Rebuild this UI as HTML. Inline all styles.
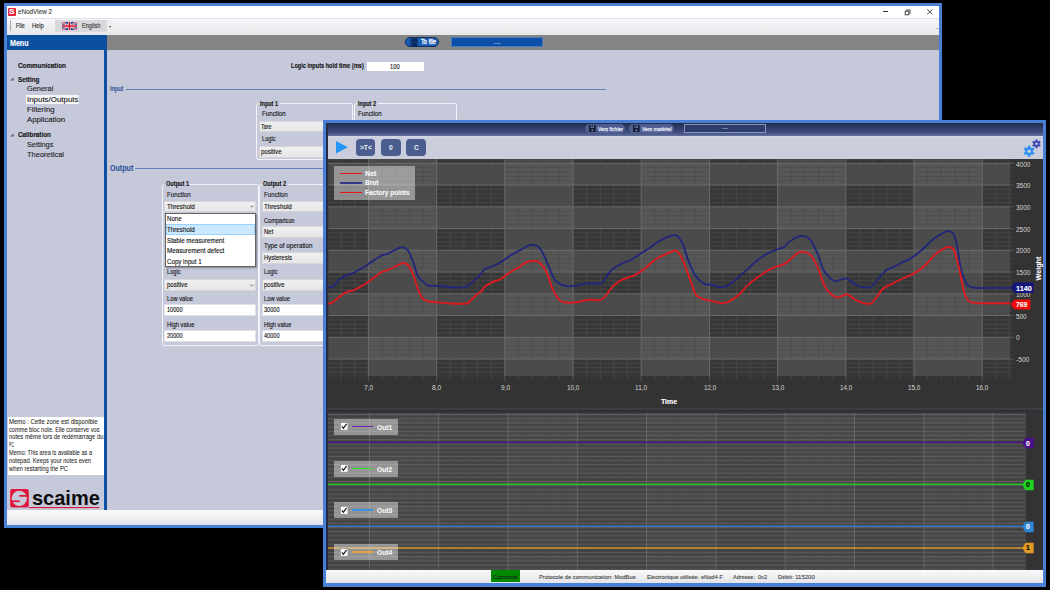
<!DOCTYPE html>
<html><head><meta charset="utf-8"><style>
html,body{margin:0;padding:0;}
body{width:1050px;height:590px;background:#000;position:relative;overflow:hidden;font-family:"Liberation Sans", sans-serif;}
.r{position:absolute;}
.t{position:absolute;white-space:pre;line-height:1;transform-origin:0 0;-webkit-text-stroke:0.12px currentColor;}
</style></head><body>
<div class="r" style="left:4px;top:3px;width:937.8px;height:524.8px;background:#4a7fd6;"></div>
<div class="r" style="left:7px;top:6px;width:931.5px;height:518.8px;background:#c5c9da;"></div>
<div class="r" style="left:7px;top:6px;width:931.5px;height:12px;background:#fff;"></div>
<div class="r" style="left:8px;top:8px;width:8px;height:8px;background:#e2233a;border-radius:1px;"></div>
<div class="t" style="left:9.20px;top:8.04px;font-size:8px;font-weight:bold;color:#fff;transform:scaleX(1.0480);">S</div>
<div class="t" style="left:18.00px;top:9.37px;font-size:6.6px;font-weight:normal;color:#444;transform:scaleX(0.9594);">eNodView 2</div>
<div class="r" style="left:883px;top:11px;width:5px;height:1px;background:#333;"></div>
<svg class="r" style="left:904px;top:8.5px" width="7" height="7" viewBox="0 0 7 7"><path d="M2.4 1.5 V0.9 H6.1 V4.6 H5.4" stroke="#333" stroke-width="0.8" fill="none"/><rect x="1.2" y="2.2" width="3.6" height="3.6" stroke="#333" stroke-width="0.9" fill="none"/></svg>
<svg class="r" style="left:926px;top:9px" width="8" height="6" viewBox="0 0 8 6"><path d="M1.2 0.2 L6.5 5.3 M6.5 0.2 L1.2 5.3" stroke="#333" stroke-width="0.9"/></svg>
<div class="r" style="left:7px;top:18px;width:931.5px;height:1px;background:#dde3ee;"></div>
<div class="r" style="left:7px;top:19px;width:931.5px;height:15.5px;background:linear-gradient(#f7f7f9,#e6e7ea);"></div>
<div class="r" style="left:10px;top:20px;width:1px;height:11px;background:#a8a8a8;"></div>
<div class="t" style="left:15.50px;top:23.07px;font-size:6.6px;font-weight:normal;color:#222;transform:scaleX(0.8094);">File</div>
<div class="t" style="left:31.60px;top:23.07px;font-size:6.6px;font-weight:normal;color:#222;transform:scaleX(0.8627);">Help</div>
<div class="r" style="left:55px;top:19.5px;width:52px;height:12.5px;background:#d9d9dc;"></div>
<svg class="r" style="left:62px;top:22px" width="15" height="8" viewBox="0 0 60 30" preserveAspectRatio="none">
<rect width="60" height="30" fill="#1f3c8f"/>
<path d="M0,0 L60,30 M60,0 L0,30" stroke="#fff" stroke-width="6"/>
<path d="M0,0 L60,30 M60,0 L0,30" stroke="#cf142b" stroke-width="3"/>
<path d="M30,0 V30 M0,15 H60" stroke="#fff" stroke-width="10"/>
<path d="M30,0 V30 M0,15 H60" stroke="#cf142b" stroke-width="6"/></svg>
<div class="t" style="left:81.70px;top:23.17px;font-size:6.6px;font-weight:normal;color:#333;transform:scaleX(0.8456);">English</div>
<div class="r" style="left:107px;top:19.5px;width:6px;height:12.5px;background:#ededf0;"></div>
<svg class="r" style="left:108.9px;top:25.6px" width="3" height="2"><path d="M0 0 H2.4 L1.2 1.6 Z" fill="#333"/></svg>
<div class="r" style="left:936.5px;top:28.3px;width:1.5px;height:3.2px;background:repeating-linear-gradient(#777 0 0.8px,transparent 0.8px 1.6px);"></div>
<div class="r" style="left:7px;top:34.5px;width:100px;height:15.5px;background:#0b4f9e;"></div>
<div class="t" style="left:9.50px;top:38.68px;font-size:8.5px;font-weight:bold;color:#fff;transform:scaleX(0.8332);">Menu</div>
<div class="r" style="left:107px;top:34.5px;width:831.5px;height:15.5px;background:#858585;"></div>
<div class="r" style="left:405px;top:37px;width:33.5px;height:9.7px;background:#1a5cb4;border:0.8px solid #0c2e66;border-radius:5px;box-sizing:border-box;"></div>
<div class="r" style="left:410px;top:38px;width:8px;height:8px;background:#123f86;"></div>
<div class="r" style="left:411.5px;top:39px;width:5px;height:2.5px;background:#0a2a5c;"></div>
<div class="r" style="left:411.5px;top:43px;width:5px;height:3px;background:#0a2a5c;"></div>
<div class="t" style="left:421.00px;top:38.97px;font-size:6.6px;font-weight:normal;color:#f4f6fb;transform:scaleX(0.8704);-webkit-text-stroke:0.3px #f4f6fb;">To file</div>
<div class="r" style="left:451.3px;top:37.3px;width:92px;height:9.4px;background:#0b4fa6;border:0.6px solid #4c7bc6;box-sizing:border-box;"></div>
<div class="t" style="left:494.05px;top:40.28px;font-size:6px;font-weight:normal;color:#dfe8f8;transform:scaleX(1.0833);">---</div>
<div class="r" style="left:7px;top:50px;width:97px;height:460px;background:#c5c9da;"></div>
<div class="r" style="left:104.2px;top:50px;width:2.8px;height:460px;background:#0d4fa3;"></div>
<div class="r" style="left:107px;top:50px;width:831.5px;height:460px;background:#c5c9da;"></div>
<div class="t" style="left:17.90px;top:61.56px;font-size:7.2px;font-weight:bold;color:#111;transform:scaleX(0.8838);">Communication</div>
<svg class="r" style="left:10.4px;top:77px" width="4" height="4"><path d="M3.5 0.5 V3.5 H0.5 Z" fill="#555"/></svg>
<div class="t" style="left:17.90px;top:75.76px;font-size:7.2px;font-weight:bold;color:#111;transform:scaleX(0.8785);">Setting</div>
<div class="t" style="left:27.00px;top:85.14px;font-size:7.8px;font-weight:normal;color:#222;transform:scaleX(0.9477);">General</div>
<div class="r" style="left:26px;top:95px;width:53px;height:9px;background:#f6f6f8;"></div>
<div class="t" style="left:27.00px;top:95.54px;font-size:7.8px;font-weight:normal;color:#222;transform:scaleX(1.0154);">Inputs/Outputs</div>
<div class="t" style="left:27.00px;top:105.54px;font-size:7.8px;font-weight:normal;color:#222;transform:scaleX(0.9915);">Filtering</div>
<div class="t" style="left:27.00px;top:116.14px;font-size:7.8px;font-weight:normal;color:#222;">Application</div>
<svg class="r" style="left:10.4px;top:133px" width="4" height="4"><path d="M3.5 0.5 V3.5 H0.5 Z" fill="#555"/></svg>
<div class="t" style="left:17.90px;top:131.26px;font-size:7.2px;font-weight:bold;color:#111;transform:scaleX(0.8762);">Calibration</div>
<div class="t" style="left:27.00px;top:140.54px;font-size:7.8px;font-weight:normal;color:#222;transform:scaleX(0.9330);">Settings</div>
<div class="t" style="left:27.00px;top:150.64px;font-size:7.8px;font-weight:normal;color:#222;transform:scaleX(0.9591);">Theoretical</div>
<div class="r" style="left:7.7px;top:417px;width:96.3px;height:58px;background:#fff;"></div>
<div class="t" style="left:9.00px;top:418.67px;font-size:6.6px;font-weight:normal;color:#1a1a1a;transform:scaleX(0.9042);-webkit-text-stroke:0.05px #1a1a1a;">Memo : Cette zone est disponible</div>
<div class="t" style="left:9.00px;top:426.57px;font-size:6.6px;font-weight:normal;color:#1a1a1a;transform:scaleX(0.8573);-webkit-text-stroke:0.05px #1a1a1a;">comme bloc note. Elle conserve vos</div>
<div class="t" style="left:9.00px;top:434.47px;font-size:6.6px;font-weight:normal;color:#1a1a1a;transform:scaleX(0.8860);-webkit-text-stroke:0.05px #1a1a1a;">notes même lors de redémarrage du</div>
<div class="t" style="left:9.00px;top:442.37px;font-size:6.6px;font-weight:normal;color:#1a1a1a;transform:scaleX(0.5451);-webkit-text-stroke:0.05px #1a1a1a;">PC</div>
<div class="t" style="left:9.00px;top:450.27px;font-size:6.6px;font-weight:normal;color:#1a1a1a;transform:scaleX(0.8460);-webkit-text-stroke:0.05px #1a1a1a;">Memo: This area is available as a</div>
<div class="t" style="left:9.00px;top:458.17px;font-size:6.6px;font-weight:normal;color:#1a1a1a;transform:scaleX(0.8636);-webkit-text-stroke:0.05px #1a1a1a;">notepad. Keeps your notes even</div>
<div class="t" style="left:9.00px;top:466.07px;font-size:6.6px;font-weight:normal;color:#1a1a1a;transform:scaleX(0.8796);-webkit-text-stroke:0.05px #1a1a1a;">when restarting the PC</div>
<svg class="r" style="left:10px;top:488px" width="91" height="22" viewBox="0 0 91 22">
<rect x="0.2" y="1" width="18.6" height="18.6" rx="2" fill="#e0173d"/>
<circle cx="9.3" cy="10.3" r="7.6" fill="#c7c9d6"/>
<rect x="9.3" y="7.0" width="9.6" height="1.7" fill="#e0173d"/>
<rect x="0.5" y="12.4" width="9.3" height="1.7" fill="#e0173d"/>
<rect x="18.8" y="19" width="70.5" height="1.1" fill="#e0173d"/>
</svg>
<div class="t" style="left:31.50px;top:488.14px;font-size:20.5px;font-weight:bold;color:#0d0d0d;transform:scaleX(0.9751);-webkit-text-stroke:0;">scaime</div>
<div class="r" style="left:7px;top:510px;width:931.5px;height:15px;background:linear-gradient(#fafafb,#e4e5e8);"></div>
<div class="t" style="left:290.70px;top:62.67px;font-size:6.6px;font-weight:bold;color:#111;transform:scaleX(0.8456);">Logic inputs hold time (ms)</div>
<div class="r" style="left:366.6px;top:61.9px;width:57.4px;height:9.1px;background:#fff;"></div>
<div class="t" style="left:390.20px;top:63.56px;font-size:6.8px;font-weight:normal;color:#111;transform:scaleX(0.8463);">100</div>
<div class="t" style="left:109.70px;top:86.27px;font-size:6.6px;font-weight:bold;color:#3a5b9e;transform:scaleX(0.8310);">Input</div>
<div class="r" style="left:125.8px;top:89px;width:480px;height:1px;background:#5f80b8;"></div>
<div class="t" style="left:109.70px;top:163.72px;font-size:9.2px;font-weight:bold;color:#2f5597;transform:scaleX(0.7738);">Output</div>
<div class="r" style="left:135.2px;top:168px;width:470px;height:1px;background:#5f80b8;"></div>
<div class="r" style="left:256.3px;top:103.2px;width:96.5px;height:57px;border:1.8px solid #f3f4f9;border-radius:2.5px;box-sizing:border-box;"></div>
<div class="r" style="left:258.8px;top:101.2px;width:21px;height:4px;background:#c5c9da;"></div>
<div class="t" style="left:260.30px;top:99.96px;font-size:7px;font-weight:bold;color:#111;transform:scaleX(0.7842);">Input 1</div>
<div class="t" style="left:261.50px;top:110.86px;font-size:6.8px;font-weight:normal;color:#111;transform:scaleX(0.9088);">Function</div>
<div class="r" style="left:258.5px;top:120.6px;width:92px;height:11.8px;background:linear-gradient(#f0f0f0,#e6e6e6);border:0.6px solid #d6d6d8;box-sizing:border-box;"></div>
<div class="t" style="left:261.30px;top:123.66px;font-size:6.8px;font-weight:normal;color:#111;transform:scaleX(0.7934);">Tare</div>
<svg class="r" style="left:344px;top:125.19999999999999px" width="4" height="3"><path d="M0.3 0.5 L2 2.2 L3.7 0.5" stroke="#555" stroke-width="0.7" fill="none"/></svg>
<div class="t" style="left:261.50px;top:136.06px;font-size:6.8px;font-weight:normal;color:#111;transform:scaleX(0.8308);">Logic</div>
<div class="r" style="left:258.5px;top:145.8px;width:92px;height:11.8px;background:linear-gradient(#f0f0f0,#e6e6e6);border:0.6px solid #d6d6d8;box-sizing:border-box;"></div>
<div class="t" style="left:261.30px;top:148.86px;font-size:6.8px;font-weight:normal;color:#111;transform:scaleX(0.8895);">positive</div>
<svg class="r" style="left:344px;top:150.4px" width="4" height="3"><path d="M0.3 0.5 L2 2.2 L3.7 0.5" stroke="#555" stroke-width="0.7" fill="none"/></svg>
<div class="r" style="left:354.1px;top:103.2px;width:102.8px;height:57px;border:1.8px solid #f3f4f9;border-radius:2.5px;box-sizing:border-box;"></div>
<div class="r" style="left:356.6px;top:101.2px;width:21px;height:4px;background:#c5c9da;"></div>
<div class="t" style="left:358.10px;top:99.96px;font-size:7px;font-weight:bold;color:#111;transform:scaleX(0.7842);">Input 2</div>
<div class="t" style="left:357.90px;top:110.86px;font-size:6.8px;font-weight:normal;color:#111;transform:scaleX(0.9088);">Function</div>
<div class="r" style="left:161.7px;top:183.6px;width:97.5px;height:162.4px;border:1.8px solid #f3f4f9;border-radius:2.5px;box-sizing:border-box;"></div>
<div class="r" style="left:164.2px;top:181.6px;width:26px;height:4px;background:#c5c9da;"></div>
<div class="t" style="left:165.70px;top:180.36px;font-size:7px;font-weight:bold;color:#111;transform:scaleX(0.7991);">Output 1</div>
<div class="t" style="left:166.60px;top:191.66px;font-size:6.8px;font-weight:normal;color:#111;transform:scaleX(0.9088);">Function</div>
<div class="r" style="left:164.3px;top:200.5px;width:91.8px;height:11.8px;background:linear-gradient(#f0f0f0,#e6e6e6);border:0.6px solid #d6d6d8;box-sizing:border-box;"></div>
<div class="t" style="left:167.10px;top:203.56px;font-size:6.8px;font-weight:normal;color:#111;transform:scaleX(0.9195);">Threshold</div>
<svg class="r" style="left:249.60000000000002px;top:205.1px" width="4" height="3"><path d="M0.3 0.5 L2 2.2 L3.7 0.5" stroke="#555" stroke-width="0.7" fill="none"/></svg>
<div class="t" style="left:166.60px;top:269.36px;font-size:6.8px;font-weight:normal;color:#111;transform:scaleX(0.8308);">Logic</div>
<div class="r" style="left:164.3px;top:279.1px;width:91.8px;height:11.8px;background:linear-gradient(#f0f0f0,#e6e6e6);border:0.6px solid #d6d6d8;box-sizing:border-box;"></div>
<div class="t" style="left:167.10px;top:282.16px;font-size:6.8px;font-weight:normal;color:#111;transform:scaleX(0.8895);">positive</div>
<svg class="r" style="left:249.60000000000002px;top:283.70000000000005px" width="4" height="3"><path d="M0.3 0.5 L2 2.2 L3.7 0.5" stroke="#555" stroke-width="0.7" fill="none"/></svg>
<div class="t" style="left:166.60px;top:295.86px;font-size:6.8px;font-weight:normal;color:#111;transform:scaleX(0.8494);">Low value</div>
<div class="r" style="left:164.3px;top:304.1px;width:91.8px;height:11.8px;background:#fff;border:0.6px solid #dfe1e8;box-sizing:border-box;"></div>
<div class="t" style="left:167.10px;top:307.16px;font-size:6.8px;font-weight:normal;color:#111;transform:scaleX(0.8198);">10000</div>
<div class="t" style="left:166.60px;top:321.86px;font-size:6.8px;font-weight:normal;color:#111;transform:scaleX(0.8560);">High value</div>
<div class="r" style="left:164.3px;top:330px;width:91.8px;height:11.8px;background:#fff;border:0.6px solid #dfe1e8;box-sizing:border-box;"></div>
<div class="t" style="left:167.10px;top:333.06px;font-size:6.8px;font-weight:normal;color:#111;transform:scaleX(0.8198);">20000</div>
<div class="r" style="left:259.2px;top:183.6px;width:97.5px;height:162.4px;border:1.8px solid #f3f4f9;border-radius:2.5px;box-sizing:border-box;"></div>
<div class="r" style="left:261.7px;top:181.6px;width:26px;height:4px;background:#c5c9da;"></div>
<div class="t" style="left:263.20px;top:180.36px;font-size:7px;font-weight:bold;color:#111;transform:scaleX(0.7991);">Output 2</div>
<div class="t" style="left:263.50px;top:191.66px;font-size:6.8px;font-weight:normal;color:#111;transform:scaleX(0.9088);">Function</div>
<div class="r" style="left:261.5px;top:200.5px;width:93px;height:11.8px;background:linear-gradient(#f0f0f0,#e6e6e6);border:0.6px solid #d6d6d8;box-sizing:border-box;"></div>
<div class="t" style="left:264.30px;top:203.56px;font-size:6.8px;font-weight:normal;color:#111;transform:scaleX(0.9195);">Threshold</div>
<svg class="r" style="left:348px;top:205.1px" width="4" height="3"><path d="M0.3 0.5 L2 2.2 L3.7 0.5" stroke="#555" stroke-width="0.7" fill="none"/></svg>
<div class="t" style="left:263.50px;top:217.56px;font-size:6.8px;font-weight:normal;color:#111;transform:scaleX(0.8321);">Comparison</div>
<div class="r" style="left:261.5px;top:226.4px;width:93px;height:11.8px;background:linear-gradient(#f0f0f0,#e6e6e6);border:0.6px solid #d6d6d8;box-sizing:border-box;"></div>
<div class="t" style="left:264.30px;top:229.46px;font-size:6.8px;font-weight:normal;color:#111;transform:scaleX(0.8792);">Net</div>
<svg class="r" style="left:348px;top:231.0px" width="4" height="3"><path d="M0.3 0.5 L2 2.2 L3.7 0.5" stroke="#555" stroke-width="0.7" fill="none"/></svg>
<div class="t" style="left:263.50px;top:243.46px;font-size:6.8px;font-weight:normal;color:#111;transform:scaleX(0.9233);">Type of operation</div>
<div class="r" style="left:261.5px;top:252.3px;width:93px;height:11.8px;background:linear-gradient(#f0f0f0,#e6e6e6);border:0.6px solid #d6d6d8;box-sizing:border-box;"></div>
<div class="t" style="left:264.30px;top:255.36px;font-size:6.8px;font-weight:normal;color:#111;transform:scaleX(0.8823);">Hysteresis</div>
<svg class="r" style="left:348px;top:256.90000000000003px" width="4" height="3"><path d="M0.3 0.5 L2 2.2 L3.7 0.5" stroke="#555" stroke-width="0.7" fill="none"/></svg>
<div class="t" style="left:263.50px;top:269.36px;font-size:6.8px;font-weight:normal;color:#111;transform:scaleX(0.8308);">Logic</div>
<div class="r" style="left:261.5px;top:279.1px;width:93px;height:11.8px;background:linear-gradient(#f0f0f0,#e6e6e6);border:0.6px solid #d6d6d8;box-sizing:border-box;"></div>
<div class="t" style="left:264.30px;top:282.16px;font-size:6.8px;font-weight:normal;color:#111;transform:scaleX(0.8895);">positive</div>
<svg class="r" style="left:348px;top:283.70000000000005px" width="4" height="3"><path d="M0.3 0.5 L2 2.2 L3.7 0.5" stroke="#555" stroke-width="0.7" fill="none"/></svg>
<div class="t" style="left:263.50px;top:295.86px;font-size:6.8px;font-weight:normal;color:#111;transform:scaleX(0.8494);">Low value</div>
<div class="r" style="left:261.5px;top:304.1px;width:93px;height:11.8px;background:#fff;border:0.6px solid #dfe1e8;box-sizing:border-box;"></div>
<div class="t" style="left:264.30px;top:307.16px;font-size:6.8px;font-weight:normal;color:#111;transform:scaleX(0.8198);">30000</div>
<div class="t" style="left:263.50px;top:321.86px;font-size:6.8px;font-weight:normal;color:#111;transform:scaleX(0.8560);">High value</div>
<div class="r" style="left:261.5px;top:330px;width:93px;height:11.8px;background:#fff;border:0.6px solid #dfe1e8;box-sizing:border-box;"></div>
<div class="t" style="left:264.30px;top:333.06px;font-size:6.8px;font-weight:normal;color:#111;transform:scaleX(0.8198);">40000</div>
<div class="r" style="left:164.8px;top:213.4px;width:91px;height:53.8px;background:#fff;border:0.7px solid #646464;box-sizing:border-box;box-shadow:1px 1px 1.5px rgba(0,0,0,0.35);"></div>
<div class="r" style="left:165.6px;top:224.4px;width:89.4px;height:10.4px;background:#cce8ff;border:0.6px solid #99d1ff;box-sizing:border-box;"></div>
<div class="t" style="left:167.20px;top:216.36px;font-size:6.8px;font-weight:normal;color:#111;transform:scaleX(0.8985);">None</div>
<div class="t" style="left:167.20px;top:226.96px;font-size:6.8px;font-weight:normal;color:#111;transform:scaleX(0.9195);">Threshold</div>
<div class="t" style="left:167.20px;top:237.86px;font-size:6.8px;font-weight:normal;color:#111;transform:scaleX(0.9136);">Stable measurement</div>
<div class="t" style="left:167.20px;top:248.36px;font-size:6.8px;font-weight:normal;color:#111;transform:scaleX(0.9247);">Measurement defect</div>
<div class="t" style="left:167.20px;top:258.66px;font-size:6.8px;font-weight:normal;color:#111;transform:scaleX(0.9064);">Copy input 1</div>
<div id="w2">
<div class="r" style="left:323px;top:120px;width:723px;height:466.8px;background:#4a7fd6;"></div>
<div class="r" style="left:326px;top:123.3px;width:717px;height:446.4px;background:#3a4260;"></div>
<div class="r" style="left:326px;top:123.3px;width:2px;height:446.4px;background:#232b45;"></div>
<div class="r" style="left:328px;top:123.3px;width:715px;height:12.7px;background:linear-gradient(#232c4e,#3e4c7c 70%,#62719f);"></div>
<div class="r" style="left:585.2px;top:124.3px;width:39.6px;height:8.6px;background:#56659a;border-radius:4.3px;opacity:0.85;"></div>
<svg class="r" style="left:589.0px;top:124.8px" width="6.7" height="7.6" viewBox="0 0 6.7 7.6"><rect width="6.7" height="7.6" fill="#161c38"/><rect x="1.6" y="0.6" width="3.4" height="2.2" fill="#7d89b0"/><rect x="2.6" y="0.9" width="1.2" height="1.4" fill="#161c38"/><circle cx="3.35" cy="5.3" r="1.1" fill="#6e7aa3"/></svg>
<div class="t" style="left:598.20px;top:126.08px;font-size:6px;font-weight:normal;color:#e8ecf6;transform:scaleX(0.8421);-webkit-text-stroke:0.25px #e8ecf6;">Vers fichier</div>
<div class="r" style="left:629.3px;top:124.3px;width:44.3px;height:8.6px;background:#56659a;border-radius:4.3px;opacity:0.85;"></div>
<svg class="r" style="left:633.0999999999999px;top:124.8px" width="6.7" height="7.6" viewBox="0 0 6.7 7.6"><rect width="6.7" height="7.6" fill="#161c38"/><rect x="1.6" y="0.6" width="3.4" height="2.2" fill="#7d89b0"/><rect x="2.6" y="0.9" width="1.2" height="1.4" fill="#161c38"/><circle cx="3.35" cy="5.3" r="1.1" fill="#6e7aa3"/></svg>
<div class="t" style="left:642.30px;top:126.08px;font-size:6px;font-weight:normal;color:#e8ecf6;transform:scaleX(0.8425);-webkit-text-stroke:0.25px #e8ecf6;">Vers matériel</div>
<div class="r" style="left:684.1px;top:124.2px;width:81.6px;height:9.2px;background:#2d3c6a;border:0.6px solid #8a96bc;box-sizing:border-box;"></div>
<div class="t" style="left:721.90px;top:126.34px;font-size:5.5px;font-weight:normal;color:#dfe4f0;transform:scaleX(1.0909);">---</div>
<div class="r" style="left:328px;top:135.8px;width:715px;height:23.3px;background:linear-gradient(#d3d6e3,#c9cddc 15%,#c9cddc);"></div>
<svg class="r" style="left:336px;top:141.3px" width="12" height="12.5"><path d="M0 0 L11.8 6.2 L0 12.4 Z" fill="#2196f3"/></svg>
<div class="r" style="left:356.1px;top:138.7px;width:19.4px;height:17.5px;background:#4b5d8f;border-radius:3.8px;"></div>
<div class="t" style="left:359.90px;top:143.75px;font-size:7.4px;font-weight:bold;color:#eef1f8;transform:scaleX(0.8969);-webkit-text-stroke:0;">&gt;T&lt;</div>
<div class="r" style="left:381.2px;top:138.7px;width:19.4px;height:17.5px;background:#4b5d8f;border-radius:3.8px;"></div>
<div class="t" style="left:389.00px;top:143.75px;font-size:7.4px;font-weight:bold;color:#eef1f8;transform:scaleX(0.9212);-webkit-text-stroke:0;">0</div>
<div class="r" style="left:406.4px;top:138.7px;width:19.4px;height:17.5px;background:#4b5d8f;border-radius:3.8px;"></div>
<div class="t" style="left:413.70px;top:143.75px;font-size:7.4px;font-weight:bold;color:#eef1f8;transform:scaleX(0.8982);-webkit-text-stroke:0;">C</div>
<svg class="r" style="left:1023px;top:138.5px" width="19" height="19" viewBox="0 0 19 19">
<g transform="translate(13.5,4.8)" fill="#3b47b3"><circle r="3.1"/><g id="tg"><rect x="-1" y="-4.4" width="2" height="2" transform="rotate(0)"/><rect x="-1" y="-4.4" width="2" height="2" transform="rotate(60)"/><rect x="-1" y="-4.4" width="2" height="2" transform="rotate(120)"/><rect x="-1" y="-4.4" width="2" height="2" transform="rotate(180)"/><rect x="-1" y="-4.4" width="2" height="2" transform="rotate(240)"/><rect x="-1" y="-4.4" width="2" height="2" transform="rotate(300)"/></g><circle r="1.3" fill="#c9cddc"/></g>
<g transform="translate(6.1,12.2)" fill="#2e8ff0"><circle r="3.9"/><rect x="-1.25" y="-5.5" width="2.5" height="2.4" transform="rotate(0)"/><rect x="-1.25" y="-5.5" width="2.5" height="2.4" transform="rotate(60)"/><rect x="-1.25" y="-5.5" width="2.5" height="2.4" transform="rotate(120)"/><rect x="-1.25" y="-5.5" width="2.5" height="2.4" transform="rotate(180)"/><rect x="-1.25" y="-5.5" width="2.5" height="2.4" transform="rotate(240)"/><rect x="-1.25" y="-5.5" width="2.5" height="2.4" transform="rotate(300)"/><circle r="1.7" fill="#c9cddc"/></g>
</svg>
<svg class="r" style="left:0;top:0" width="1050" height="590" viewBox="0 0 1050 590">
<defs><clipPath id="pc"><rect x="328.2" y="159.1" width="682.1" height="217.2"/></clipPath><clipPath id="dc"><rect x="328" y="412.6" width="698.2" height="157.1"/></clipPath></defs>
<rect x="328" y="159.1" width="715" height="410.6" fill="#333"/>
<g clip-path="url(#pc)">
<rect x="328.2" y="159.1" width="682.0999999999999" height="217.20000000000002" fill="#4b4b4b"/>
<rect x="232.00" y="163.30" width="68.20" height="21.75" fill="#575757"/>
<rect x="232.00" y="206.80" width="68.20" height="21.75" fill="#575757"/>
<rect x="232.00" y="250.30" width="68.20" height="21.75" fill="#575757"/>
<rect x="232.00" y="293.80" width="68.20" height="21.75" fill="#575757"/>
<rect x="232.00" y="337.30" width="68.20" height="21.75" fill="#575757"/>
<rect x="232.00" y="380.80" width="68.20" height="21.75" fill="#575757"/>
<rect x="300.20" y="141.55" width="68.20" height="21.75" fill="#373737"/>
<rect x="300.20" y="185.05" width="68.20" height="21.75" fill="#373737"/>
<rect x="300.20" y="228.55" width="68.20" height="21.75" fill="#373737"/>
<rect x="300.20" y="272.05" width="68.20" height="21.75" fill="#373737"/>
<rect x="300.20" y="315.55" width="68.20" height="21.75" fill="#373737"/>
<rect x="300.20" y="359.05" width="68.20" height="21.75" fill="#373737"/>
<rect x="368.40" y="163.30" width="68.20" height="21.75" fill="#575757"/>
<rect x="368.40" y="206.80" width="68.20" height="21.75" fill="#575757"/>
<rect x="368.40" y="250.30" width="68.20" height="21.75" fill="#575757"/>
<rect x="368.40" y="293.80" width="68.20" height="21.75" fill="#575757"/>
<rect x="368.40" y="337.30" width="68.20" height="21.75" fill="#575757"/>
<rect x="368.40" y="380.80" width="68.20" height="21.75" fill="#575757"/>
<rect x="436.60" y="141.55" width="68.20" height="21.75" fill="#373737"/>
<rect x="436.60" y="185.05" width="68.20" height="21.75" fill="#373737"/>
<rect x="436.60" y="228.55" width="68.20" height="21.75" fill="#373737"/>
<rect x="436.60" y="272.05" width="68.20" height="21.75" fill="#373737"/>
<rect x="436.60" y="315.55" width="68.20" height="21.75" fill="#373737"/>
<rect x="436.60" y="359.05" width="68.20" height="21.75" fill="#373737"/>
<rect x="504.80" y="163.30" width="68.20" height="21.75" fill="#575757"/>
<rect x="504.80" y="206.80" width="68.20" height="21.75" fill="#575757"/>
<rect x="504.80" y="250.30" width="68.20" height="21.75" fill="#575757"/>
<rect x="504.80" y="293.80" width="68.20" height="21.75" fill="#575757"/>
<rect x="504.80" y="337.30" width="68.20" height="21.75" fill="#575757"/>
<rect x="504.80" y="380.80" width="68.20" height="21.75" fill="#575757"/>
<rect x="573.00" y="141.55" width="68.20" height="21.75" fill="#373737"/>
<rect x="573.00" y="185.05" width="68.20" height="21.75" fill="#373737"/>
<rect x="573.00" y="228.55" width="68.20" height="21.75" fill="#373737"/>
<rect x="573.00" y="272.05" width="68.20" height="21.75" fill="#373737"/>
<rect x="573.00" y="315.55" width="68.20" height="21.75" fill="#373737"/>
<rect x="573.00" y="359.05" width="68.20" height="21.75" fill="#373737"/>
<rect x="641.20" y="163.30" width="68.20" height="21.75" fill="#575757"/>
<rect x="641.20" y="206.80" width="68.20" height="21.75" fill="#575757"/>
<rect x="641.20" y="250.30" width="68.20" height="21.75" fill="#575757"/>
<rect x="641.20" y="293.80" width="68.20" height="21.75" fill="#575757"/>
<rect x="641.20" y="337.30" width="68.20" height="21.75" fill="#575757"/>
<rect x="641.20" y="380.80" width="68.20" height="21.75" fill="#575757"/>
<rect x="709.40" y="141.55" width="68.20" height="21.75" fill="#373737"/>
<rect x="709.40" y="185.05" width="68.20" height="21.75" fill="#373737"/>
<rect x="709.40" y="228.55" width="68.20" height="21.75" fill="#373737"/>
<rect x="709.40" y="272.05" width="68.20" height="21.75" fill="#373737"/>
<rect x="709.40" y="315.55" width="68.20" height="21.75" fill="#373737"/>
<rect x="709.40" y="359.05" width="68.20" height="21.75" fill="#373737"/>
<rect x="777.60" y="163.30" width="68.20" height="21.75" fill="#575757"/>
<rect x="777.60" y="206.80" width="68.20" height="21.75" fill="#575757"/>
<rect x="777.60" y="250.30" width="68.20" height="21.75" fill="#575757"/>
<rect x="777.60" y="293.80" width="68.20" height="21.75" fill="#575757"/>
<rect x="777.60" y="337.30" width="68.20" height="21.75" fill="#575757"/>
<rect x="777.60" y="380.80" width="68.20" height="21.75" fill="#575757"/>
<rect x="845.80" y="141.55" width="68.20" height="21.75" fill="#373737"/>
<rect x="845.80" y="185.05" width="68.20" height="21.75" fill="#373737"/>
<rect x="845.80" y="228.55" width="68.20" height="21.75" fill="#373737"/>
<rect x="845.80" y="272.05" width="68.20" height="21.75" fill="#373737"/>
<rect x="845.80" y="315.55" width="68.20" height="21.75" fill="#373737"/>
<rect x="845.80" y="359.05" width="68.20" height="21.75" fill="#373737"/>
<rect x="914.00" y="163.30" width="68.20" height="21.75" fill="#575757"/>
<rect x="914.00" y="206.80" width="68.20" height="21.75" fill="#575757"/>
<rect x="914.00" y="250.30" width="68.20" height="21.75" fill="#575757"/>
<rect x="914.00" y="293.80" width="68.20" height="21.75" fill="#575757"/>
<rect x="914.00" y="337.30" width="68.20" height="21.75" fill="#575757"/>
<rect x="914.00" y="380.80" width="68.20" height="21.75" fill="#575757"/>
<rect x="982.20" y="141.55" width="68.20" height="21.75" fill="#373737"/>
<rect x="982.20" y="185.05" width="68.20" height="21.75" fill="#373737"/>
<rect x="982.20" y="228.55" width="68.20" height="21.75" fill="#373737"/>
<rect x="982.20" y="272.05" width="68.20" height="21.75" fill="#373737"/>
<rect x="982.20" y="315.55" width="68.20" height="21.75" fill="#373737"/>
<rect x="982.20" y="359.05" width="68.20" height="21.75" fill="#373737"/>
<rect x="245.14" y="163.30" width="1" height="21.75" fill="#4f4f4f"/>
<rect x="232.00" y="167.15" width="68.20" height="1" fill="#4f4f4f"/>
<rect x="258.78" y="163.30" width="1" height="21.75" fill="#4f4f4f"/>
<rect x="232.00" y="171.50" width="68.20" height="1" fill="#4f4f4f"/>
<rect x="272.42" y="163.30" width="1" height="21.75" fill="#4f4f4f"/>
<rect x="232.00" y="175.85" width="68.20" height="1" fill="#4f4f4f"/>
<rect x="286.06" y="163.30" width="1" height="21.75" fill="#4f4f4f"/>
<rect x="232.00" y="180.20" width="68.20" height="1" fill="#4f4f4f"/>
<rect x="245.14" y="206.80" width="1" height="21.75" fill="#4f4f4f"/>
<rect x="232.00" y="210.65" width="68.20" height="1" fill="#4f4f4f"/>
<rect x="258.78" y="206.80" width="1" height="21.75" fill="#4f4f4f"/>
<rect x="232.00" y="215.00" width="68.20" height="1" fill="#4f4f4f"/>
<rect x="272.42" y="206.80" width="1" height="21.75" fill="#4f4f4f"/>
<rect x="232.00" y="219.35" width="68.20" height="1" fill="#4f4f4f"/>
<rect x="286.06" y="206.80" width="1" height="21.75" fill="#4f4f4f"/>
<rect x="232.00" y="223.70" width="68.20" height="1" fill="#4f4f4f"/>
<rect x="245.14" y="250.30" width="1" height="21.75" fill="#4f4f4f"/>
<rect x="232.00" y="254.15" width="68.20" height="1" fill="#4f4f4f"/>
<rect x="258.78" y="250.30" width="1" height="21.75" fill="#4f4f4f"/>
<rect x="232.00" y="258.50" width="68.20" height="1" fill="#4f4f4f"/>
<rect x="272.42" y="250.30" width="1" height="21.75" fill="#4f4f4f"/>
<rect x="232.00" y="262.85" width="68.20" height="1" fill="#4f4f4f"/>
<rect x="286.06" y="250.30" width="1" height="21.75" fill="#4f4f4f"/>
<rect x="232.00" y="267.20" width="68.20" height="1" fill="#4f4f4f"/>
<rect x="245.14" y="293.80" width="1" height="21.75" fill="#4f4f4f"/>
<rect x="232.00" y="297.65" width="68.20" height="1" fill="#4f4f4f"/>
<rect x="258.78" y="293.80" width="1" height="21.75" fill="#4f4f4f"/>
<rect x="232.00" y="302.00" width="68.20" height="1" fill="#4f4f4f"/>
<rect x="272.42" y="293.80" width="1" height="21.75" fill="#4f4f4f"/>
<rect x="232.00" y="306.35" width="68.20" height="1" fill="#4f4f4f"/>
<rect x="286.06" y="293.80" width="1" height="21.75" fill="#4f4f4f"/>
<rect x="232.00" y="310.70" width="68.20" height="1" fill="#4f4f4f"/>
<rect x="245.14" y="337.30" width="1" height="21.75" fill="#4f4f4f"/>
<rect x="232.00" y="341.15" width="68.20" height="1" fill="#4f4f4f"/>
<rect x="258.78" y="337.30" width="1" height="21.75" fill="#4f4f4f"/>
<rect x="232.00" y="345.50" width="68.20" height="1" fill="#4f4f4f"/>
<rect x="272.42" y="337.30" width="1" height="21.75" fill="#4f4f4f"/>
<rect x="232.00" y="349.85" width="68.20" height="1" fill="#4f4f4f"/>
<rect x="286.06" y="337.30" width="1" height="21.75" fill="#4f4f4f"/>
<rect x="232.00" y="354.20" width="68.20" height="1" fill="#4f4f4f"/>
<rect x="245.14" y="380.80" width="1" height="21.75" fill="#4f4f4f"/>
<rect x="232.00" y="384.65" width="68.20" height="1" fill="#4f4f4f"/>
<rect x="258.78" y="380.80" width="1" height="21.75" fill="#4f4f4f"/>
<rect x="232.00" y="389.00" width="68.20" height="1" fill="#4f4f4f"/>
<rect x="272.42" y="380.80" width="1" height="21.75" fill="#4f4f4f"/>
<rect x="232.00" y="393.35" width="68.20" height="1" fill="#4f4f4f"/>
<rect x="286.06" y="380.80" width="1" height="21.75" fill="#4f4f4f"/>
<rect x="232.00" y="397.70" width="68.20" height="1" fill="#4f4f4f"/>
<rect x="313.34" y="141.55" width="1" height="21.75" fill="#474747"/>
<rect x="300.20" y="145.40" width="68.20" height="1" fill="#474747"/>
<rect x="326.98" y="141.55" width="1" height="21.75" fill="#474747"/>
<rect x="300.20" y="149.75" width="68.20" height="1" fill="#474747"/>
<rect x="340.62" y="141.55" width="1" height="21.75" fill="#474747"/>
<rect x="300.20" y="154.10" width="68.20" height="1" fill="#474747"/>
<rect x="354.26" y="141.55" width="1" height="21.75" fill="#474747"/>
<rect x="300.20" y="158.45" width="68.20" height="1" fill="#474747"/>
<rect x="313.34" y="185.05" width="1" height="21.75" fill="#474747"/>
<rect x="300.20" y="188.90" width="68.20" height="1" fill="#474747"/>
<rect x="326.98" y="185.05" width="1" height="21.75" fill="#474747"/>
<rect x="300.20" y="193.25" width="68.20" height="1" fill="#474747"/>
<rect x="340.62" y="185.05" width="1" height="21.75" fill="#474747"/>
<rect x="300.20" y="197.60" width="68.20" height="1" fill="#474747"/>
<rect x="354.26" y="185.05" width="1" height="21.75" fill="#474747"/>
<rect x="300.20" y="201.95" width="68.20" height="1" fill="#474747"/>
<rect x="313.34" y="228.55" width="1" height="21.75" fill="#474747"/>
<rect x="300.20" y="232.40" width="68.20" height="1" fill="#474747"/>
<rect x="326.98" y="228.55" width="1" height="21.75" fill="#474747"/>
<rect x="300.20" y="236.75" width="68.20" height="1" fill="#474747"/>
<rect x="340.62" y="228.55" width="1" height="21.75" fill="#474747"/>
<rect x="300.20" y="241.10" width="68.20" height="1" fill="#474747"/>
<rect x="354.26" y="228.55" width="1" height="21.75" fill="#474747"/>
<rect x="300.20" y="245.45" width="68.20" height="1" fill="#474747"/>
<rect x="313.34" y="272.05" width="1" height="21.75" fill="#474747"/>
<rect x="300.20" y="275.90" width="68.20" height="1" fill="#474747"/>
<rect x="326.98" y="272.05" width="1" height="21.75" fill="#474747"/>
<rect x="300.20" y="280.25" width="68.20" height="1" fill="#474747"/>
<rect x="340.62" y="272.05" width="1" height="21.75" fill="#474747"/>
<rect x="300.20" y="284.60" width="68.20" height="1" fill="#474747"/>
<rect x="354.26" y="272.05" width="1" height="21.75" fill="#474747"/>
<rect x="300.20" y="288.95" width="68.20" height="1" fill="#474747"/>
<rect x="313.34" y="315.55" width="1" height="21.75" fill="#474747"/>
<rect x="300.20" y="319.40" width="68.20" height="1" fill="#474747"/>
<rect x="326.98" y="315.55" width="1" height="21.75" fill="#474747"/>
<rect x="300.20" y="323.75" width="68.20" height="1" fill="#474747"/>
<rect x="340.62" y="315.55" width="1" height="21.75" fill="#474747"/>
<rect x="300.20" y="328.10" width="68.20" height="1" fill="#474747"/>
<rect x="354.26" y="315.55" width="1" height="21.75" fill="#474747"/>
<rect x="300.20" y="332.45" width="68.20" height="1" fill="#474747"/>
<rect x="313.34" y="359.05" width="1" height="21.75" fill="#474747"/>
<rect x="300.20" y="362.90" width="68.20" height="1" fill="#474747"/>
<rect x="326.98" y="359.05" width="1" height="21.75" fill="#474747"/>
<rect x="300.20" y="367.25" width="68.20" height="1" fill="#474747"/>
<rect x="340.62" y="359.05" width="1" height="21.75" fill="#474747"/>
<rect x="300.20" y="371.60" width="68.20" height="1" fill="#474747"/>
<rect x="354.26" y="359.05" width="1" height="21.75" fill="#474747"/>
<rect x="300.20" y="375.95" width="68.20" height="1" fill="#474747"/>
<rect x="381.54" y="163.30" width="1" height="21.75" fill="#4f4f4f"/>
<rect x="368.40" y="167.15" width="68.20" height="1" fill="#4f4f4f"/>
<rect x="395.18" y="163.30" width="1" height="21.75" fill="#4f4f4f"/>
<rect x="368.40" y="171.50" width="68.20" height="1" fill="#4f4f4f"/>
<rect x="408.82" y="163.30" width="1" height="21.75" fill="#4f4f4f"/>
<rect x="368.40" y="175.85" width="68.20" height="1" fill="#4f4f4f"/>
<rect x="422.46" y="163.30" width="1" height="21.75" fill="#4f4f4f"/>
<rect x="368.40" y="180.20" width="68.20" height="1" fill="#4f4f4f"/>
<rect x="381.54" y="206.80" width="1" height="21.75" fill="#4f4f4f"/>
<rect x="368.40" y="210.65" width="68.20" height="1" fill="#4f4f4f"/>
<rect x="395.18" y="206.80" width="1" height="21.75" fill="#4f4f4f"/>
<rect x="368.40" y="215.00" width="68.20" height="1" fill="#4f4f4f"/>
<rect x="408.82" y="206.80" width="1" height="21.75" fill="#4f4f4f"/>
<rect x="368.40" y="219.35" width="68.20" height="1" fill="#4f4f4f"/>
<rect x="422.46" y="206.80" width="1" height="21.75" fill="#4f4f4f"/>
<rect x="368.40" y="223.70" width="68.20" height="1" fill="#4f4f4f"/>
<rect x="381.54" y="250.30" width="1" height="21.75" fill="#4f4f4f"/>
<rect x="368.40" y="254.15" width="68.20" height="1" fill="#4f4f4f"/>
<rect x="395.18" y="250.30" width="1" height="21.75" fill="#4f4f4f"/>
<rect x="368.40" y="258.50" width="68.20" height="1" fill="#4f4f4f"/>
<rect x="408.82" y="250.30" width="1" height="21.75" fill="#4f4f4f"/>
<rect x="368.40" y="262.85" width="68.20" height="1" fill="#4f4f4f"/>
<rect x="422.46" y="250.30" width="1" height="21.75" fill="#4f4f4f"/>
<rect x="368.40" y="267.20" width="68.20" height="1" fill="#4f4f4f"/>
<rect x="381.54" y="293.80" width="1" height="21.75" fill="#4f4f4f"/>
<rect x="368.40" y="297.65" width="68.20" height="1" fill="#4f4f4f"/>
<rect x="395.18" y="293.80" width="1" height="21.75" fill="#4f4f4f"/>
<rect x="368.40" y="302.00" width="68.20" height="1" fill="#4f4f4f"/>
<rect x="408.82" y="293.80" width="1" height="21.75" fill="#4f4f4f"/>
<rect x="368.40" y="306.35" width="68.20" height="1" fill="#4f4f4f"/>
<rect x="422.46" y="293.80" width="1" height="21.75" fill="#4f4f4f"/>
<rect x="368.40" y="310.70" width="68.20" height="1" fill="#4f4f4f"/>
<rect x="381.54" y="337.30" width="1" height="21.75" fill="#4f4f4f"/>
<rect x="368.40" y="341.15" width="68.20" height="1" fill="#4f4f4f"/>
<rect x="395.18" y="337.30" width="1" height="21.75" fill="#4f4f4f"/>
<rect x="368.40" y="345.50" width="68.20" height="1" fill="#4f4f4f"/>
<rect x="408.82" y="337.30" width="1" height="21.75" fill="#4f4f4f"/>
<rect x="368.40" y="349.85" width="68.20" height="1" fill="#4f4f4f"/>
<rect x="422.46" y="337.30" width="1" height="21.75" fill="#4f4f4f"/>
<rect x="368.40" y="354.20" width="68.20" height="1" fill="#4f4f4f"/>
<rect x="381.54" y="380.80" width="1" height="21.75" fill="#4f4f4f"/>
<rect x="368.40" y="384.65" width="68.20" height="1" fill="#4f4f4f"/>
<rect x="395.18" y="380.80" width="1" height="21.75" fill="#4f4f4f"/>
<rect x="368.40" y="389.00" width="68.20" height="1" fill="#4f4f4f"/>
<rect x="408.82" y="380.80" width="1" height="21.75" fill="#4f4f4f"/>
<rect x="368.40" y="393.35" width="68.20" height="1" fill="#4f4f4f"/>
<rect x="422.46" y="380.80" width="1" height="21.75" fill="#4f4f4f"/>
<rect x="368.40" y="397.70" width="68.20" height="1" fill="#4f4f4f"/>
<rect x="449.74" y="141.55" width="1" height="21.75" fill="#474747"/>
<rect x="436.60" y="145.40" width="68.20" height="1" fill="#474747"/>
<rect x="463.38" y="141.55" width="1" height="21.75" fill="#474747"/>
<rect x="436.60" y="149.75" width="68.20" height="1" fill="#474747"/>
<rect x="477.02" y="141.55" width="1" height="21.75" fill="#474747"/>
<rect x="436.60" y="154.10" width="68.20" height="1" fill="#474747"/>
<rect x="490.66" y="141.55" width="1" height="21.75" fill="#474747"/>
<rect x="436.60" y="158.45" width="68.20" height="1" fill="#474747"/>
<rect x="449.74" y="185.05" width="1" height="21.75" fill="#474747"/>
<rect x="436.60" y="188.90" width="68.20" height="1" fill="#474747"/>
<rect x="463.38" y="185.05" width="1" height="21.75" fill="#474747"/>
<rect x="436.60" y="193.25" width="68.20" height="1" fill="#474747"/>
<rect x="477.02" y="185.05" width="1" height="21.75" fill="#474747"/>
<rect x="436.60" y="197.60" width="68.20" height="1" fill="#474747"/>
<rect x="490.66" y="185.05" width="1" height="21.75" fill="#474747"/>
<rect x="436.60" y="201.95" width="68.20" height="1" fill="#474747"/>
<rect x="449.74" y="228.55" width="1" height="21.75" fill="#474747"/>
<rect x="436.60" y="232.40" width="68.20" height="1" fill="#474747"/>
<rect x="463.38" y="228.55" width="1" height="21.75" fill="#474747"/>
<rect x="436.60" y="236.75" width="68.20" height="1" fill="#474747"/>
<rect x="477.02" y="228.55" width="1" height="21.75" fill="#474747"/>
<rect x="436.60" y="241.10" width="68.20" height="1" fill="#474747"/>
<rect x="490.66" y="228.55" width="1" height="21.75" fill="#474747"/>
<rect x="436.60" y="245.45" width="68.20" height="1" fill="#474747"/>
<rect x="449.74" y="272.05" width="1" height="21.75" fill="#474747"/>
<rect x="436.60" y="275.90" width="68.20" height="1" fill="#474747"/>
<rect x="463.38" y="272.05" width="1" height="21.75" fill="#474747"/>
<rect x="436.60" y="280.25" width="68.20" height="1" fill="#474747"/>
<rect x="477.02" y="272.05" width="1" height="21.75" fill="#474747"/>
<rect x="436.60" y="284.60" width="68.20" height="1" fill="#474747"/>
<rect x="490.66" y="272.05" width="1" height="21.75" fill="#474747"/>
<rect x="436.60" y="288.95" width="68.20" height="1" fill="#474747"/>
<rect x="449.74" y="315.55" width="1" height="21.75" fill="#474747"/>
<rect x="436.60" y="319.40" width="68.20" height="1" fill="#474747"/>
<rect x="463.38" y="315.55" width="1" height="21.75" fill="#474747"/>
<rect x="436.60" y="323.75" width="68.20" height="1" fill="#474747"/>
<rect x="477.02" y="315.55" width="1" height="21.75" fill="#474747"/>
<rect x="436.60" y="328.10" width="68.20" height="1" fill="#474747"/>
<rect x="490.66" y="315.55" width="1" height="21.75" fill="#474747"/>
<rect x="436.60" y="332.45" width="68.20" height="1" fill="#474747"/>
<rect x="449.74" y="359.05" width="1" height="21.75" fill="#474747"/>
<rect x="436.60" y="362.90" width="68.20" height="1" fill="#474747"/>
<rect x="463.38" y="359.05" width="1" height="21.75" fill="#474747"/>
<rect x="436.60" y="367.25" width="68.20" height="1" fill="#474747"/>
<rect x="477.02" y="359.05" width="1" height="21.75" fill="#474747"/>
<rect x="436.60" y="371.60" width="68.20" height="1" fill="#474747"/>
<rect x="490.66" y="359.05" width="1" height="21.75" fill="#474747"/>
<rect x="436.60" y="375.95" width="68.20" height="1" fill="#474747"/>
<rect x="517.94" y="163.30" width="1" height="21.75" fill="#4f4f4f"/>
<rect x="504.80" y="167.15" width="68.20" height="1" fill="#4f4f4f"/>
<rect x="531.58" y="163.30" width="1" height="21.75" fill="#4f4f4f"/>
<rect x="504.80" y="171.50" width="68.20" height="1" fill="#4f4f4f"/>
<rect x="545.22" y="163.30" width="1" height="21.75" fill="#4f4f4f"/>
<rect x="504.80" y="175.85" width="68.20" height="1" fill="#4f4f4f"/>
<rect x="558.86" y="163.30" width="1" height="21.75" fill="#4f4f4f"/>
<rect x="504.80" y="180.20" width="68.20" height="1" fill="#4f4f4f"/>
<rect x="517.94" y="206.80" width="1" height="21.75" fill="#4f4f4f"/>
<rect x="504.80" y="210.65" width="68.20" height="1" fill="#4f4f4f"/>
<rect x="531.58" y="206.80" width="1" height="21.75" fill="#4f4f4f"/>
<rect x="504.80" y="215.00" width="68.20" height="1" fill="#4f4f4f"/>
<rect x="545.22" y="206.80" width="1" height="21.75" fill="#4f4f4f"/>
<rect x="504.80" y="219.35" width="68.20" height="1" fill="#4f4f4f"/>
<rect x="558.86" y="206.80" width="1" height="21.75" fill="#4f4f4f"/>
<rect x="504.80" y="223.70" width="68.20" height="1" fill="#4f4f4f"/>
<rect x="517.94" y="250.30" width="1" height="21.75" fill="#4f4f4f"/>
<rect x="504.80" y="254.15" width="68.20" height="1" fill="#4f4f4f"/>
<rect x="531.58" y="250.30" width="1" height="21.75" fill="#4f4f4f"/>
<rect x="504.80" y="258.50" width="68.20" height="1" fill="#4f4f4f"/>
<rect x="545.22" y="250.30" width="1" height="21.75" fill="#4f4f4f"/>
<rect x="504.80" y="262.85" width="68.20" height="1" fill="#4f4f4f"/>
<rect x="558.86" y="250.30" width="1" height="21.75" fill="#4f4f4f"/>
<rect x="504.80" y="267.20" width="68.20" height="1" fill="#4f4f4f"/>
<rect x="517.94" y="293.80" width="1" height="21.75" fill="#4f4f4f"/>
<rect x="504.80" y="297.65" width="68.20" height="1" fill="#4f4f4f"/>
<rect x="531.58" y="293.80" width="1" height="21.75" fill="#4f4f4f"/>
<rect x="504.80" y="302.00" width="68.20" height="1" fill="#4f4f4f"/>
<rect x="545.22" y="293.80" width="1" height="21.75" fill="#4f4f4f"/>
<rect x="504.80" y="306.35" width="68.20" height="1" fill="#4f4f4f"/>
<rect x="558.86" y="293.80" width="1" height="21.75" fill="#4f4f4f"/>
<rect x="504.80" y="310.70" width="68.20" height="1" fill="#4f4f4f"/>
<rect x="517.94" y="337.30" width="1" height="21.75" fill="#4f4f4f"/>
<rect x="504.80" y="341.15" width="68.20" height="1" fill="#4f4f4f"/>
<rect x="531.58" y="337.30" width="1" height="21.75" fill="#4f4f4f"/>
<rect x="504.80" y="345.50" width="68.20" height="1" fill="#4f4f4f"/>
<rect x="545.22" y="337.30" width="1" height="21.75" fill="#4f4f4f"/>
<rect x="504.80" y="349.85" width="68.20" height="1" fill="#4f4f4f"/>
<rect x="558.86" y="337.30" width="1" height="21.75" fill="#4f4f4f"/>
<rect x="504.80" y="354.20" width="68.20" height="1" fill="#4f4f4f"/>
<rect x="517.94" y="380.80" width="1" height="21.75" fill="#4f4f4f"/>
<rect x="504.80" y="384.65" width="68.20" height="1" fill="#4f4f4f"/>
<rect x="531.58" y="380.80" width="1" height="21.75" fill="#4f4f4f"/>
<rect x="504.80" y="389.00" width="68.20" height="1" fill="#4f4f4f"/>
<rect x="545.22" y="380.80" width="1" height="21.75" fill="#4f4f4f"/>
<rect x="504.80" y="393.35" width="68.20" height="1" fill="#4f4f4f"/>
<rect x="558.86" y="380.80" width="1" height="21.75" fill="#4f4f4f"/>
<rect x="504.80" y="397.70" width="68.20" height="1" fill="#4f4f4f"/>
<rect x="586.14" y="141.55" width="1" height="21.75" fill="#474747"/>
<rect x="573.00" y="145.40" width="68.20" height="1" fill="#474747"/>
<rect x="599.78" y="141.55" width="1" height="21.75" fill="#474747"/>
<rect x="573.00" y="149.75" width="68.20" height="1" fill="#474747"/>
<rect x="613.42" y="141.55" width="1" height="21.75" fill="#474747"/>
<rect x="573.00" y="154.10" width="68.20" height="1" fill="#474747"/>
<rect x="627.06" y="141.55" width="1" height="21.75" fill="#474747"/>
<rect x="573.00" y="158.45" width="68.20" height="1" fill="#474747"/>
<rect x="586.14" y="185.05" width="1" height="21.75" fill="#474747"/>
<rect x="573.00" y="188.90" width="68.20" height="1" fill="#474747"/>
<rect x="599.78" y="185.05" width="1" height="21.75" fill="#474747"/>
<rect x="573.00" y="193.25" width="68.20" height="1" fill="#474747"/>
<rect x="613.42" y="185.05" width="1" height="21.75" fill="#474747"/>
<rect x="573.00" y="197.60" width="68.20" height="1" fill="#474747"/>
<rect x="627.06" y="185.05" width="1" height="21.75" fill="#474747"/>
<rect x="573.00" y="201.95" width="68.20" height="1" fill="#474747"/>
<rect x="586.14" y="228.55" width="1" height="21.75" fill="#474747"/>
<rect x="573.00" y="232.40" width="68.20" height="1" fill="#474747"/>
<rect x="599.78" y="228.55" width="1" height="21.75" fill="#474747"/>
<rect x="573.00" y="236.75" width="68.20" height="1" fill="#474747"/>
<rect x="613.42" y="228.55" width="1" height="21.75" fill="#474747"/>
<rect x="573.00" y="241.10" width="68.20" height="1" fill="#474747"/>
<rect x="627.06" y="228.55" width="1" height="21.75" fill="#474747"/>
<rect x="573.00" y="245.45" width="68.20" height="1" fill="#474747"/>
<rect x="586.14" y="272.05" width="1" height="21.75" fill="#474747"/>
<rect x="573.00" y="275.90" width="68.20" height="1" fill="#474747"/>
<rect x="599.78" y="272.05" width="1" height="21.75" fill="#474747"/>
<rect x="573.00" y="280.25" width="68.20" height="1" fill="#474747"/>
<rect x="613.42" y="272.05" width="1" height="21.75" fill="#474747"/>
<rect x="573.00" y="284.60" width="68.20" height="1" fill="#474747"/>
<rect x="627.06" y="272.05" width="1" height="21.75" fill="#474747"/>
<rect x="573.00" y="288.95" width="68.20" height="1" fill="#474747"/>
<rect x="586.14" y="315.55" width="1" height="21.75" fill="#474747"/>
<rect x="573.00" y="319.40" width="68.20" height="1" fill="#474747"/>
<rect x="599.78" y="315.55" width="1" height="21.75" fill="#474747"/>
<rect x="573.00" y="323.75" width="68.20" height="1" fill="#474747"/>
<rect x="613.42" y="315.55" width="1" height="21.75" fill="#474747"/>
<rect x="573.00" y="328.10" width="68.20" height="1" fill="#474747"/>
<rect x="627.06" y="315.55" width="1" height="21.75" fill="#474747"/>
<rect x="573.00" y="332.45" width="68.20" height="1" fill="#474747"/>
<rect x="586.14" y="359.05" width="1" height="21.75" fill="#474747"/>
<rect x="573.00" y="362.90" width="68.20" height="1" fill="#474747"/>
<rect x="599.78" y="359.05" width="1" height="21.75" fill="#474747"/>
<rect x="573.00" y="367.25" width="68.20" height="1" fill="#474747"/>
<rect x="613.42" y="359.05" width="1" height="21.75" fill="#474747"/>
<rect x="573.00" y="371.60" width="68.20" height="1" fill="#474747"/>
<rect x="627.06" y="359.05" width="1" height="21.75" fill="#474747"/>
<rect x="573.00" y="375.95" width="68.20" height="1" fill="#474747"/>
<rect x="654.34" y="163.30" width="1" height="21.75" fill="#4f4f4f"/>
<rect x="641.20" y="167.15" width="68.20" height="1" fill="#4f4f4f"/>
<rect x="667.98" y="163.30" width="1" height="21.75" fill="#4f4f4f"/>
<rect x="641.20" y="171.50" width="68.20" height="1" fill="#4f4f4f"/>
<rect x="681.62" y="163.30" width="1" height="21.75" fill="#4f4f4f"/>
<rect x="641.20" y="175.85" width="68.20" height="1" fill="#4f4f4f"/>
<rect x="695.26" y="163.30" width="1" height="21.75" fill="#4f4f4f"/>
<rect x="641.20" y="180.20" width="68.20" height="1" fill="#4f4f4f"/>
<rect x="654.34" y="206.80" width="1" height="21.75" fill="#4f4f4f"/>
<rect x="641.20" y="210.65" width="68.20" height="1" fill="#4f4f4f"/>
<rect x="667.98" y="206.80" width="1" height="21.75" fill="#4f4f4f"/>
<rect x="641.20" y="215.00" width="68.20" height="1" fill="#4f4f4f"/>
<rect x="681.62" y="206.80" width="1" height="21.75" fill="#4f4f4f"/>
<rect x="641.20" y="219.35" width="68.20" height="1" fill="#4f4f4f"/>
<rect x="695.26" y="206.80" width="1" height="21.75" fill="#4f4f4f"/>
<rect x="641.20" y="223.70" width="68.20" height="1" fill="#4f4f4f"/>
<rect x="654.34" y="250.30" width="1" height="21.75" fill="#4f4f4f"/>
<rect x="641.20" y="254.15" width="68.20" height="1" fill="#4f4f4f"/>
<rect x="667.98" y="250.30" width="1" height="21.75" fill="#4f4f4f"/>
<rect x="641.20" y="258.50" width="68.20" height="1" fill="#4f4f4f"/>
<rect x="681.62" y="250.30" width="1" height="21.75" fill="#4f4f4f"/>
<rect x="641.20" y="262.85" width="68.20" height="1" fill="#4f4f4f"/>
<rect x="695.26" y="250.30" width="1" height="21.75" fill="#4f4f4f"/>
<rect x="641.20" y="267.20" width="68.20" height="1" fill="#4f4f4f"/>
<rect x="654.34" y="293.80" width="1" height="21.75" fill="#4f4f4f"/>
<rect x="641.20" y="297.65" width="68.20" height="1" fill="#4f4f4f"/>
<rect x="667.98" y="293.80" width="1" height="21.75" fill="#4f4f4f"/>
<rect x="641.20" y="302.00" width="68.20" height="1" fill="#4f4f4f"/>
<rect x="681.62" y="293.80" width="1" height="21.75" fill="#4f4f4f"/>
<rect x="641.20" y="306.35" width="68.20" height="1" fill="#4f4f4f"/>
<rect x="695.26" y="293.80" width="1" height="21.75" fill="#4f4f4f"/>
<rect x="641.20" y="310.70" width="68.20" height="1" fill="#4f4f4f"/>
<rect x="654.34" y="337.30" width="1" height="21.75" fill="#4f4f4f"/>
<rect x="641.20" y="341.15" width="68.20" height="1" fill="#4f4f4f"/>
<rect x="667.98" y="337.30" width="1" height="21.75" fill="#4f4f4f"/>
<rect x="641.20" y="345.50" width="68.20" height="1" fill="#4f4f4f"/>
<rect x="681.62" y="337.30" width="1" height="21.75" fill="#4f4f4f"/>
<rect x="641.20" y="349.85" width="68.20" height="1" fill="#4f4f4f"/>
<rect x="695.26" y="337.30" width="1" height="21.75" fill="#4f4f4f"/>
<rect x="641.20" y="354.20" width="68.20" height="1" fill="#4f4f4f"/>
<rect x="654.34" y="380.80" width="1" height="21.75" fill="#4f4f4f"/>
<rect x="641.20" y="384.65" width="68.20" height="1" fill="#4f4f4f"/>
<rect x="667.98" y="380.80" width="1" height="21.75" fill="#4f4f4f"/>
<rect x="641.20" y="389.00" width="68.20" height="1" fill="#4f4f4f"/>
<rect x="681.62" y="380.80" width="1" height="21.75" fill="#4f4f4f"/>
<rect x="641.20" y="393.35" width="68.20" height="1" fill="#4f4f4f"/>
<rect x="695.26" y="380.80" width="1" height="21.75" fill="#4f4f4f"/>
<rect x="641.20" y="397.70" width="68.20" height="1" fill="#4f4f4f"/>
<rect x="722.54" y="141.55" width="1" height="21.75" fill="#474747"/>
<rect x="709.40" y="145.40" width="68.20" height="1" fill="#474747"/>
<rect x="736.18" y="141.55" width="1" height="21.75" fill="#474747"/>
<rect x="709.40" y="149.75" width="68.20" height="1" fill="#474747"/>
<rect x="749.82" y="141.55" width="1" height="21.75" fill="#474747"/>
<rect x="709.40" y="154.10" width="68.20" height="1" fill="#474747"/>
<rect x="763.46" y="141.55" width="1" height="21.75" fill="#474747"/>
<rect x="709.40" y="158.45" width="68.20" height="1" fill="#474747"/>
<rect x="722.54" y="185.05" width="1" height="21.75" fill="#474747"/>
<rect x="709.40" y="188.90" width="68.20" height="1" fill="#474747"/>
<rect x="736.18" y="185.05" width="1" height="21.75" fill="#474747"/>
<rect x="709.40" y="193.25" width="68.20" height="1" fill="#474747"/>
<rect x="749.82" y="185.05" width="1" height="21.75" fill="#474747"/>
<rect x="709.40" y="197.60" width="68.20" height="1" fill="#474747"/>
<rect x="763.46" y="185.05" width="1" height="21.75" fill="#474747"/>
<rect x="709.40" y="201.95" width="68.20" height="1" fill="#474747"/>
<rect x="722.54" y="228.55" width="1" height="21.75" fill="#474747"/>
<rect x="709.40" y="232.40" width="68.20" height="1" fill="#474747"/>
<rect x="736.18" y="228.55" width="1" height="21.75" fill="#474747"/>
<rect x="709.40" y="236.75" width="68.20" height="1" fill="#474747"/>
<rect x="749.82" y="228.55" width="1" height="21.75" fill="#474747"/>
<rect x="709.40" y="241.10" width="68.20" height="1" fill="#474747"/>
<rect x="763.46" y="228.55" width="1" height="21.75" fill="#474747"/>
<rect x="709.40" y="245.45" width="68.20" height="1" fill="#474747"/>
<rect x="722.54" y="272.05" width="1" height="21.75" fill="#474747"/>
<rect x="709.40" y="275.90" width="68.20" height="1" fill="#474747"/>
<rect x="736.18" y="272.05" width="1" height="21.75" fill="#474747"/>
<rect x="709.40" y="280.25" width="68.20" height="1" fill="#474747"/>
<rect x="749.82" y="272.05" width="1" height="21.75" fill="#474747"/>
<rect x="709.40" y="284.60" width="68.20" height="1" fill="#474747"/>
<rect x="763.46" y="272.05" width="1" height="21.75" fill="#474747"/>
<rect x="709.40" y="288.95" width="68.20" height="1" fill="#474747"/>
<rect x="722.54" y="315.55" width="1" height="21.75" fill="#474747"/>
<rect x="709.40" y="319.40" width="68.20" height="1" fill="#474747"/>
<rect x="736.18" y="315.55" width="1" height="21.75" fill="#474747"/>
<rect x="709.40" y="323.75" width="68.20" height="1" fill="#474747"/>
<rect x="749.82" y="315.55" width="1" height="21.75" fill="#474747"/>
<rect x="709.40" y="328.10" width="68.20" height="1" fill="#474747"/>
<rect x="763.46" y="315.55" width="1" height="21.75" fill="#474747"/>
<rect x="709.40" y="332.45" width="68.20" height="1" fill="#474747"/>
<rect x="722.54" y="359.05" width="1" height="21.75" fill="#474747"/>
<rect x="709.40" y="362.90" width="68.20" height="1" fill="#474747"/>
<rect x="736.18" y="359.05" width="1" height="21.75" fill="#474747"/>
<rect x="709.40" y="367.25" width="68.20" height="1" fill="#474747"/>
<rect x="749.82" y="359.05" width="1" height="21.75" fill="#474747"/>
<rect x="709.40" y="371.60" width="68.20" height="1" fill="#474747"/>
<rect x="763.46" y="359.05" width="1" height="21.75" fill="#474747"/>
<rect x="709.40" y="375.95" width="68.20" height="1" fill="#474747"/>
<rect x="790.74" y="163.30" width="1" height="21.75" fill="#4f4f4f"/>
<rect x="777.60" y="167.15" width="68.20" height="1" fill="#4f4f4f"/>
<rect x="804.38" y="163.30" width="1" height="21.75" fill="#4f4f4f"/>
<rect x="777.60" y="171.50" width="68.20" height="1" fill="#4f4f4f"/>
<rect x="818.02" y="163.30" width="1" height="21.75" fill="#4f4f4f"/>
<rect x="777.60" y="175.85" width="68.20" height="1" fill="#4f4f4f"/>
<rect x="831.66" y="163.30" width="1" height="21.75" fill="#4f4f4f"/>
<rect x="777.60" y="180.20" width="68.20" height="1" fill="#4f4f4f"/>
<rect x="790.74" y="206.80" width="1" height="21.75" fill="#4f4f4f"/>
<rect x="777.60" y="210.65" width="68.20" height="1" fill="#4f4f4f"/>
<rect x="804.38" y="206.80" width="1" height="21.75" fill="#4f4f4f"/>
<rect x="777.60" y="215.00" width="68.20" height="1" fill="#4f4f4f"/>
<rect x="818.02" y="206.80" width="1" height="21.75" fill="#4f4f4f"/>
<rect x="777.60" y="219.35" width="68.20" height="1" fill="#4f4f4f"/>
<rect x="831.66" y="206.80" width="1" height="21.75" fill="#4f4f4f"/>
<rect x="777.60" y="223.70" width="68.20" height="1" fill="#4f4f4f"/>
<rect x="790.74" y="250.30" width="1" height="21.75" fill="#4f4f4f"/>
<rect x="777.60" y="254.15" width="68.20" height="1" fill="#4f4f4f"/>
<rect x="804.38" y="250.30" width="1" height="21.75" fill="#4f4f4f"/>
<rect x="777.60" y="258.50" width="68.20" height="1" fill="#4f4f4f"/>
<rect x="818.02" y="250.30" width="1" height="21.75" fill="#4f4f4f"/>
<rect x="777.60" y="262.85" width="68.20" height="1" fill="#4f4f4f"/>
<rect x="831.66" y="250.30" width="1" height="21.75" fill="#4f4f4f"/>
<rect x="777.60" y="267.20" width="68.20" height="1" fill="#4f4f4f"/>
<rect x="790.74" y="293.80" width="1" height="21.75" fill="#4f4f4f"/>
<rect x="777.60" y="297.65" width="68.20" height="1" fill="#4f4f4f"/>
<rect x="804.38" y="293.80" width="1" height="21.75" fill="#4f4f4f"/>
<rect x="777.60" y="302.00" width="68.20" height="1" fill="#4f4f4f"/>
<rect x="818.02" y="293.80" width="1" height="21.75" fill="#4f4f4f"/>
<rect x="777.60" y="306.35" width="68.20" height="1" fill="#4f4f4f"/>
<rect x="831.66" y="293.80" width="1" height="21.75" fill="#4f4f4f"/>
<rect x="777.60" y="310.70" width="68.20" height="1" fill="#4f4f4f"/>
<rect x="790.74" y="337.30" width="1" height="21.75" fill="#4f4f4f"/>
<rect x="777.60" y="341.15" width="68.20" height="1" fill="#4f4f4f"/>
<rect x="804.38" y="337.30" width="1" height="21.75" fill="#4f4f4f"/>
<rect x="777.60" y="345.50" width="68.20" height="1" fill="#4f4f4f"/>
<rect x="818.02" y="337.30" width="1" height="21.75" fill="#4f4f4f"/>
<rect x="777.60" y="349.85" width="68.20" height="1" fill="#4f4f4f"/>
<rect x="831.66" y="337.30" width="1" height="21.75" fill="#4f4f4f"/>
<rect x="777.60" y="354.20" width="68.20" height="1" fill="#4f4f4f"/>
<rect x="790.74" y="380.80" width="1" height="21.75" fill="#4f4f4f"/>
<rect x="777.60" y="384.65" width="68.20" height="1" fill="#4f4f4f"/>
<rect x="804.38" y="380.80" width="1" height="21.75" fill="#4f4f4f"/>
<rect x="777.60" y="389.00" width="68.20" height="1" fill="#4f4f4f"/>
<rect x="818.02" y="380.80" width="1" height="21.75" fill="#4f4f4f"/>
<rect x="777.60" y="393.35" width="68.20" height="1" fill="#4f4f4f"/>
<rect x="831.66" y="380.80" width="1" height="21.75" fill="#4f4f4f"/>
<rect x="777.60" y="397.70" width="68.20" height="1" fill="#4f4f4f"/>
<rect x="858.94" y="141.55" width="1" height="21.75" fill="#474747"/>
<rect x="845.80" y="145.40" width="68.20" height="1" fill="#474747"/>
<rect x="872.58" y="141.55" width="1" height="21.75" fill="#474747"/>
<rect x="845.80" y="149.75" width="68.20" height="1" fill="#474747"/>
<rect x="886.22" y="141.55" width="1" height="21.75" fill="#474747"/>
<rect x="845.80" y="154.10" width="68.20" height="1" fill="#474747"/>
<rect x="899.86" y="141.55" width="1" height="21.75" fill="#474747"/>
<rect x="845.80" y="158.45" width="68.20" height="1" fill="#474747"/>
<rect x="858.94" y="185.05" width="1" height="21.75" fill="#474747"/>
<rect x="845.80" y="188.90" width="68.20" height="1" fill="#474747"/>
<rect x="872.58" y="185.05" width="1" height="21.75" fill="#474747"/>
<rect x="845.80" y="193.25" width="68.20" height="1" fill="#474747"/>
<rect x="886.22" y="185.05" width="1" height="21.75" fill="#474747"/>
<rect x="845.80" y="197.60" width="68.20" height="1" fill="#474747"/>
<rect x="899.86" y="185.05" width="1" height="21.75" fill="#474747"/>
<rect x="845.80" y="201.95" width="68.20" height="1" fill="#474747"/>
<rect x="858.94" y="228.55" width="1" height="21.75" fill="#474747"/>
<rect x="845.80" y="232.40" width="68.20" height="1" fill="#474747"/>
<rect x="872.58" y="228.55" width="1" height="21.75" fill="#474747"/>
<rect x="845.80" y="236.75" width="68.20" height="1" fill="#474747"/>
<rect x="886.22" y="228.55" width="1" height="21.75" fill="#474747"/>
<rect x="845.80" y="241.10" width="68.20" height="1" fill="#474747"/>
<rect x="899.86" y="228.55" width="1" height="21.75" fill="#474747"/>
<rect x="845.80" y="245.45" width="68.20" height="1" fill="#474747"/>
<rect x="858.94" y="272.05" width="1" height="21.75" fill="#474747"/>
<rect x="845.80" y="275.90" width="68.20" height="1" fill="#474747"/>
<rect x="872.58" y="272.05" width="1" height="21.75" fill="#474747"/>
<rect x="845.80" y="280.25" width="68.20" height="1" fill="#474747"/>
<rect x="886.22" y="272.05" width="1" height="21.75" fill="#474747"/>
<rect x="845.80" y="284.60" width="68.20" height="1" fill="#474747"/>
<rect x="899.86" y="272.05" width="1" height="21.75" fill="#474747"/>
<rect x="845.80" y="288.95" width="68.20" height="1" fill="#474747"/>
<rect x="858.94" y="315.55" width="1" height="21.75" fill="#474747"/>
<rect x="845.80" y="319.40" width="68.20" height="1" fill="#474747"/>
<rect x="872.58" y="315.55" width="1" height="21.75" fill="#474747"/>
<rect x="845.80" y="323.75" width="68.20" height="1" fill="#474747"/>
<rect x="886.22" y="315.55" width="1" height="21.75" fill="#474747"/>
<rect x="845.80" y="328.10" width="68.20" height="1" fill="#474747"/>
<rect x="899.86" y="315.55" width="1" height="21.75" fill="#474747"/>
<rect x="845.80" y="332.45" width="68.20" height="1" fill="#474747"/>
<rect x="858.94" y="359.05" width="1" height="21.75" fill="#474747"/>
<rect x="845.80" y="362.90" width="68.20" height="1" fill="#474747"/>
<rect x="872.58" y="359.05" width="1" height="21.75" fill="#474747"/>
<rect x="845.80" y="367.25" width="68.20" height="1" fill="#474747"/>
<rect x="886.22" y="359.05" width="1" height="21.75" fill="#474747"/>
<rect x="845.80" y="371.60" width="68.20" height="1" fill="#474747"/>
<rect x="899.86" y="359.05" width="1" height="21.75" fill="#474747"/>
<rect x="845.80" y="375.95" width="68.20" height="1" fill="#474747"/>
<rect x="927.14" y="163.30" width="1" height="21.75" fill="#4f4f4f"/>
<rect x="914.00" y="167.15" width="68.20" height="1" fill="#4f4f4f"/>
<rect x="940.78" y="163.30" width="1" height="21.75" fill="#4f4f4f"/>
<rect x="914.00" y="171.50" width="68.20" height="1" fill="#4f4f4f"/>
<rect x="954.42" y="163.30" width="1" height="21.75" fill="#4f4f4f"/>
<rect x="914.00" y="175.85" width="68.20" height="1" fill="#4f4f4f"/>
<rect x="968.06" y="163.30" width="1" height="21.75" fill="#4f4f4f"/>
<rect x="914.00" y="180.20" width="68.20" height="1" fill="#4f4f4f"/>
<rect x="927.14" y="206.80" width="1" height="21.75" fill="#4f4f4f"/>
<rect x="914.00" y="210.65" width="68.20" height="1" fill="#4f4f4f"/>
<rect x="940.78" y="206.80" width="1" height="21.75" fill="#4f4f4f"/>
<rect x="914.00" y="215.00" width="68.20" height="1" fill="#4f4f4f"/>
<rect x="954.42" y="206.80" width="1" height="21.75" fill="#4f4f4f"/>
<rect x="914.00" y="219.35" width="68.20" height="1" fill="#4f4f4f"/>
<rect x="968.06" y="206.80" width="1" height="21.75" fill="#4f4f4f"/>
<rect x="914.00" y="223.70" width="68.20" height="1" fill="#4f4f4f"/>
<rect x="927.14" y="250.30" width="1" height="21.75" fill="#4f4f4f"/>
<rect x="914.00" y="254.15" width="68.20" height="1" fill="#4f4f4f"/>
<rect x="940.78" y="250.30" width="1" height="21.75" fill="#4f4f4f"/>
<rect x="914.00" y="258.50" width="68.20" height="1" fill="#4f4f4f"/>
<rect x="954.42" y="250.30" width="1" height="21.75" fill="#4f4f4f"/>
<rect x="914.00" y="262.85" width="68.20" height="1" fill="#4f4f4f"/>
<rect x="968.06" y="250.30" width="1" height="21.75" fill="#4f4f4f"/>
<rect x="914.00" y="267.20" width="68.20" height="1" fill="#4f4f4f"/>
<rect x="927.14" y="293.80" width="1" height="21.75" fill="#4f4f4f"/>
<rect x="914.00" y="297.65" width="68.20" height="1" fill="#4f4f4f"/>
<rect x="940.78" y="293.80" width="1" height="21.75" fill="#4f4f4f"/>
<rect x="914.00" y="302.00" width="68.20" height="1" fill="#4f4f4f"/>
<rect x="954.42" y="293.80" width="1" height="21.75" fill="#4f4f4f"/>
<rect x="914.00" y="306.35" width="68.20" height="1" fill="#4f4f4f"/>
<rect x="968.06" y="293.80" width="1" height="21.75" fill="#4f4f4f"/>
<rect x="914.00" y="310.70" width="68.20" height="1" fill="#4f4f4f"/>
<rect x="927.14" y="337.30" width="1" height="21.75" fill="#4f4f4f"/>
<rect x="914.00" y="341.15" width="68.20" height="1" fill="#4f4f4f"/>
<rect x="940.78" y="337.30" width="1" height="21.75" fill="#4f4f4f"/>
<rect x="914.00" y="345.50" width="68.20" height="1" fill="#4f4f4f"/>
<rect x="954.42" y="337.30" width="1" height="21.75" fill="#4f4f4f"/>
<rect x="914.00" y="349.85" width="68.20" height="1" fill="#4f4f4f"/>
<rect x="968.06" y="337.30" width="1" height="21.75" fill="#4f4f4f"/>
<rect x="914.00" y="354.20" width="68.20" height="1" fill="#4f4f4f"/>
<rect x="927.14" y="380.80" width="1" height="21.75" fill="#4f4f4f"/>
<rect x="914.00" y="384.65" width="68.20" height="1" fill="#4f4f4f"/>
<rect x="940.78" y="380.80" width="1" height="21.75" fill="#4f4f4f"/>
<rect x="914.00" y="389.00" width="68.20" height="1" fill="#4f4f4f"/>
<rect x="954.42" y="380.80" width="1" height="21.75" fill="#4f4f4f"/>
<rect x="914.00" y="393.35" width="68.20" height="1" fill="#4f4f4f"/>
<rect x="968.06" y="380.80" width="1" height="21.75" fill="#4f4f4f"/>
<rect x="914.00" y="397.70" width="68.20" height="1" fill="#4f4f4f"/>
<rect x="995.34" y="141.55" width="1" height="21.75" fill="#474747"/>
<rect x="982.20" y="145.40" width="68.20" height="1" fill="#474747"/>
<rect x="1008.98" y="141.55" width="1" height="21.75" fill="#474747"/>
<rect x="982.20" y="149.75" width="68.20" height="1" fill="#474747"/>
<rect x="1022.62" y="141.55" width="1" height="21.75" fill="#474747"/>
<rect x="982.20" y="154.10" width="68.20" height="1" fill="#474747"/>
<rect x="1036.26" y="141.55" width="1" height="21.75" fill="#474747"/>
<rect x="982.20" y="158.45" width="68.20" height="1" fill="#474747"/>
<rect x="995.34" y="185.05" width="1" height="21.75" fill="#474747"/>
<rect x="982.20" y="188.90" width="68.20" height="1" fill="#474747"/>
<rect x="1008.98" y="185.05" width="1" height="21.75" fill="#474747"/>
<rect x="982.20" y="193.25" width="68.20" height="1" fill="#474747"/>
<rect x="1022.62" y="185.05" width="1" height="21.75" fill="#474747"/>
<rect x="982.20" y="197.60" width="68.20" height="1" fill="#474747"/>
<rect x="1036.26" y="185.05" width="1" height="21.75" fill="#474747"/>
<rect x="982.20" y="201.95" width="68.20" height="1" fill="#474747"/>
<rect x="995.34" y="228.55" width="1" height="21.75" fill="#474747"/>
<rect x="982.20" y="232.40" width="68.20" height="1" fill="#474747"/>
<rect x="1008.98" y="228.55" width="1" height="21.75" fill="#474747"/>
<rect x="982.20" y="236.75" width="68.20" height="1" fill="#474747"/>
<rect x="1022.62" y="228.55" width="1" height="21.75" fill="#474747"/>
<rect x="982.20" y="241.10" width="68.20" height="1" fill="#474747"/>
<rect x="1036.26" y="228.55" width="1" height="21.75" fill="#474747"/>
<rect x="982.20" y="245.45" width="68.20" height="1" fill="#474747"/>
<rect x="995.34" y="272.05" width="1" height="21.75" fill="#474747"/>
<rect x="982.20" y="275.90" width="68.20" height="1" fill="#474747"/>
<rect x="1008.98" y="272.05" width="1" height="21.75" fill="#474747"/>
<rect x="982.20" y="280.25" width="68.20" height="1" fill="#474747"/>
<rect x="1022.62" y="272.05" width="1" height="21.75" fill="#474747"/>
<rect x="982.20" y="284.60" width="68.20" height="1" fill="#474747"/>
<rect x="1036.26" y="272.05" width="1" height="21.75" fill="#474747"/>
<rect x="982.20" y="288.95" width="68.20" height="1" fill="#474747"/>
<rect x="995.34" y="315.55" width="1" height="21.75" fill="#474747"/>
<rect x="982.20" y="319.40" width="68.20" height="1" fill="#474747"/>
<rect x="1008.98" y="315.55" width="1" height="21.75" fill="#474747"/>
<rect x="982.20" y="323.75" width="68.20" height="1" fill="#474747"/>
<rect x="1022.62" y="315.55" width="1" height="21.75" fill="#474747"/>
<rect x="982.20" y="328.10" width="68.20" height="1" fill="#474747"/>
<rect x="1036.26" y="315.55" width="1" height="21.75" fill="#474747"/>
<rect x="982.20" y="332.45" width="68.20" height="1" fill="#474747"/>
<rect x="995.34" y="359.05" width="1" height="21.75" fill="#474747"/>
<rect x="982.20" y="362.90" width="68.20" height="1" fill="#474747"/>
<rect x="1008.98" y="359.05" width="1" height="21.75" fill="#474747"/>
<rect x="982.20" y="367.25" width="68.20" height="1" fill="#474747"/>
<rect x="1022.62" y="359.05" width="1" height="21.75" fill="#474747"/>
<rect x="982.20" y="371.60" width="68.20" height="1" fill="#474747"/>
<rect x="1036.26" y="359.05" width="1" height="21.75" fill="#474747"/>
<rect x="982.20" y="375.95" width="68.20" height="1" fill="#474747"/>
<rect x="231.50" y="159.1" width="1" height="217.20000000000002" fill="#6a6a6a"/>
<rect x="299.70" y="159.1" width="1" height="217.20000000000002" fill="#6a6a6a"/>
<rect x="367.90" y="159.1" width="1" height="217.20000000000002" fill="#6a6a6a"/>
<rect x="436.10" y="159.1" width="1" height="217.20000000000002" fill="#6a6a6a"/>
<rect x="504.30" y="159.1" width="1" height="217.20000000000002" fill="#6a6a6a"/>
<rect x="572.50" y="159.1" width="1" height="217.20000000000002" fill="#6a6a6a"/>
<rect x="640.70" y="159.1" width="1" height="217.20000000000002" fill="#6a6a6a"/>
<rect x="708.90" y="159.1" width="1" height="217.20000000000002" fill="#6a6a6a"/>
<rect x="777.10" y="159.1" width="1" height="217.20000000000002" fill="#6a6a6a"/>
<rect x="845.30" y="159.1" width="1" height="217.20000000000002" fill="#6a6a6a"/>
<rect x="913.50" y="159.1" width="1" height="217.20000000000002" fill="#6a6a6a"/>
<rect x="981.70" y="159.1" width="1" height="217.20000000000002" fill="#6a6a6a"/>
<rect x="328.2" y="141.05" width="682.0999999999999" height="1" fill="#6a6a6a"/>
<rect x="328.2" y="162.80" width="682.0999999999999" height="1" fill="#6a6a6a"/>
<rect x="328.2" y="184.55" width="682.0999999999999" height="1" fill="#6a6a6a"/>
<rect x="328.2" y="206.30" width="682.0999999999999" height="1" fill="#6a6a6a"/>
<rect x="328.2" y="228.05" width="682.0999999999999" height="1" fill="#6a6a6a"/>
<rect x="328.2" y="249.80" width="682.0999999999999" height="1" fill="#6a6a6a"/>
<rect x="328.2" y="271.55" width="682.0999999999999" height="1" fill="#6a6a6a"/>
<rect x="328.2" y="293.30" width="682.0999999999999" height="1" fill="#6a6a6a"/>
<rect x="328.2" y="315.05" width="682.0999999999999" height="1" fill="#6a6a6a"/>
<rect x="328.2" y="336.80" width="682.0999999999999" height="1" fill="#6a6a6a"/>
<rect x="328.2" y="358.55" width="682.0999999999999" height="1" fill="#6a6a6a"/>
<rect x="328.2" y="380.30" width="682.0999999999999" height="1" fill="#6a6a6a"/>
<path d="M328.1,287.4 C328.6,287.4 330.1,288.0 331.3,287.4 C332.5,286.8 334.0,285.3 335.5,283.9 C337.0,282.5 338.4,280.5 340.2,279.1 C342.0,277.7 344.0,276.6 346.2,275.6 C348.4,274.6 351.1,274.2 353.3,273.2 C355.5,272.2 357.0,271.0 359.2,269.7 C361.4,268.4 364.1,266.9 366.3,265.5 C368.5,264.1 369.9,263.0 372.3,261.4 C374.7,259.8 378.0,257.3 380.6,256.0 C383.2,254.7 385.3,254.6 387.7,253.6 C390.1,252.6 392.6,251.1 394.8,250.1 C397.0,249.1 398.9,247.7 400.7,247.4 C402.5,247.1 404.1,247.6 405.5,248.3 C406.9,249.1 407.6,249.3 409.0,251.9 C410.4,254.5 412.4,259.8 413.8,263.7 C415.2,267.6 415.9,272.1 417.3,275.0 C418.7,277.9 420.3,279.1 422.1,280.9 C423.9,282.7 426.1,284.9 428.3,285.7 C430.5,286.5 432.8,285.6 435.4,285.7 C438.0,285.8 440.7,286.0 443.7,286.3 C446.7,286.6 449.8,287.2 453.2,287.4 C456.6,287.6 461.1,287.9 463.9,287.4 C466.7,286.9 467.8,285.9 469.8,284.5 C471.8,283.1 473.8,281.0 475.8,279.1 C477.8,277.2 480.3,274.8 481.7,273.2 C483.1,271.6 482.5,270.8 484.1,269.7 C485.7,268.6 488.8,267.7 491.2,266.7 C493.6,265.7 495.9,265.0 498.3,263.7 C500.7,262.4 503.0,260.6 505.4,259.0 C507.8,257.4 509.9,255.7 512.5,254.2 C515.0,252.7 517.9,251.3 520.7,249.8 C523.5,248.3 526.7,246.1 529.2,245.3 C531.7,244.6 533.9,244.6 535.9,245.3 C537.9,246.1 539.0,246.7 541.0,249.8 C543.0,253.0 545.5,259.2 547.8,264.2 C550.1,269.1 552.3,276.1 554.6,279.5 C556.9,282.9 559.1,283.5 561.4,284.6 C563.6,285.7 565.9,286.1 568.1,286.3 C570.4,286.5 572.1,286.3 574.9,285.9 C577.7,285.5 582.3,284.1 585.1,283.7 C587.9,283.2 589.4,283.2 591.9,283.2 C594.4,283.2 598.3,284.0 600.3,283.7 C602.3,283.4 602.0,283.3 603.7,281.2 C605.4,279.1 607.7,273.8 610.5,271.0 C613.3,268.2 617.3,266.0 620.7,264.2 C624.1,262.4 627.2,261.9 630.8,260.0 C634.4,258.1 639.2,254.4 642.2,252.5 C645.2,250.6 646.8,249.9 649.0,248.3 C651.2,246.8 653.5,244.7 655.7,243.2 C658.0,241.7 660.2,240.4 662.5,239.3 C664.8,238.2 667.3,237.1 669.3,236.4 C671.3,235.7 673.0,235.3 674.4,235.3 C675.8,235.3 676.4,234.9 677.8,236.4 C679.2,237.9 681.1,240.3 682.8,244.1 C684.5,247.9 685.9,254.2 687.9,259.3 C689.9,264.4 692.1,270.6 694.7,274.6 C697.3,278.7 700.9,281.9 703.6,283.6 C706.4,285.3 708.4,284.1 711.2,284.7 C714.0,285.3 717.6,287.0 720.4,287.1 C723.2,287.2 725.0,287.3 728.0,285.6 C731.0,283.9 735.2,279.8 738.7,276.8 C742.2,273.8 746.2,270.4 749.3,267.6 C752.4,264.8 754.3,262.6 757.4,260.2 C760.5,257.8 764.2,255.2 767.6,253.4 C771.0,251.6 775.1,250.2 777.8,249.2 C780.5,248.1 782.1,248.3 784.0,247.1 C785.9,245.9 786.8,243.7 789.1,242.0 C791.4,240.3 795.1,237.9 797.6,236.9 C800.1,235.9 802.3,235.8 804.3,236.1 C806.3,236.4 807.7,236.8 809.4,238.6 C811.1,240.4 812.8,243.7 814.5,247.1 C816.2,250.5 818.2,255.3 819.6,259.0 C821.0,262.7 821.3,266.1 823.0,269.2 C824.7,272.3 827.7,275.6 829.8,277.6 C831.9,279.6 833.7,281.1 835.7,281.4 C837.7,281.7 839.8,279.8 841.6,279.3 C843.4,278.8 845.0,278.1 846.7,278.5 C848.4,278.9 849.8,280.6 851.8,281.9 C853.8,283.2 856.1,285.2 858.6,286.1 C861.1,287.0 864.8,287.5 867.0,287.5 C869.2,287.5 870.1,287.8 872.1,286.1 C874.1,284.5 876.6,280.2 878.9,277.6 C881.2,275.1 883.2,272.6 885.7,270.8 C888.2,269.0 891.4,268.0 894.2,266.6 C897.0,265.2 899.8,263.8 902.6,262.4 C905.4,261.0 907.9,260.2 911.1,258.1 C914.3,256.0 918.2,253.0 922.0,249.8 C925.8,246.6 929.9,241.8 933.9,238.8 C937.9,235.8 943.0,232.9 945.8,231.7 C948.6,230.5 949.4,231.1 950.8,231.7 C952.2,232.3 953.1,232.5 954.2,235.4 C955.3,238.3 956.5,243.3 957.6,249.0 C958.7,254.7 959.6,263.7 961.0,269.3 C962.4,274.9 964.4,279.9 966.1,282.9 C967.8,285.9 968.1,286.2 971.2,287.1 C974.3,288.0 977.9,287.9 984.7,288.0 C991.5,288.1 1007.4,288.0 1011.9,288.0" fill="none" stroke="#22277a" stroke-width="1.9" stroke-linejoin="round"/>
<path d="M328.1,303.5 C328.7,303.4 330.3,303.8 331.9,302.9 C333.5,302.0 335.5,299.9 337.9,298.1 C340.3,296.3 343.6,293.5 346.2,292.2 C348.8,290.9 351.1,291.2 353.3,290.4 C355.5,289.6 357.0,288.6 359.2,287.4 C361.4,286.2 363.9,284.9 366.3,283.3 C368.7,281.7 370.8,279.9 373.4,278.0 C376.0,276.1 379.2,273.4 381.8,272.0 C384.4,270.6 386.5,270.7 388.9,269.7 C391.3,268.7 393.6,267.2 396.0,266.1 C398.4,265.0 401.1,263.3 403.1,263.1 C405.1,262.9 406.2,263.2 407.8,264.9 C409.4,266.6 411.0,269.4 412.6,273.2 C414.2,276.9 415.7,283.2 417.3,287.4 C418.9,291.5 420.6,295.8 422.4,298.1 C424.2,300.4 425.7,300.7 428.3,301.4 C430.9,302.1 434.2,301.9 437.8,302.3 C441.4,302.7 444.9,303.3 449.7,303.5 C454.4,303.7 462.8,304.1 466.3,303.5 C469.9,302.9 469.2,301.4 471.0,299.9 C472.8,298.4 475.1,296.1 476.9,294.6 C478.7,293.1 480.5,292.2 481.7,291.0 C482.9,289.8 482.5,288.8 484.1,287.4 C485.7,286.0 488.4,284.1 491.2,282.7 C494.0,281.3 498.3,280.3 500.7,279.1 C503.1,277.9 503.4,277.0 505.4,275.6 C507.4,274.2 510.1,272.3 512.5,270.8 C514.9,269.3 517.8,268.1 520.0,266.7 C522.2,265.3 523.4,263.5 525.8,262.5 C528.2,261.5 532.0,260.8 534.2,260.8 C536.5,260.8 537.3,260.8 539.3,262.5 C541.3,264.2 543.8,266.5 546.1,271.0 C548.4,275.5 550.4,284.6 552.9,289.7 C555.4,294.8 557.7,299.4 561.4,301.5 C565.1,303.6 570.4,302.7 574.9,302.4 C579.4,302.1 584.5,300.2 588.5,299.8 C592.5,299.4 596.1,300.5 598.6,300.2 C601.1,299.9 601.4,300.3 603.7,298.1 C606.0,295.9 609.4,290.1 612.2,287.1 C615.0,284.1 617.3,282.1 620.7,280.3 C624.1,278.5 629.5,277.3 632.5,276.1 C635.5,274.9 636.6,274.3 638.8,272.9 C641.0,271.5 642.8,270.1 645.6,267.8 C648.4,265.5 652.3,261.6 655.7,259.3 C659.1,257.0 662.6,255.7 665.9,254.2 C669.1,252.7 672.9,250.5 675.2,250.5 C677.5,250.5 678.0,251.9 679.5,254.2 C681.0,256.5 682.5,259.6 684.5,264.4 C686.5,269.2 689.4,277.9 691.3,283.0 C693.2,288.1 693.7,292.2 696.0,295.0 C698.3,297.8 702.6,298.6 705.1,299.6 C707.6,300.6 708.7,300.2 711.2,300.8 C713.8,301.4 717.6,302.9 720.4,303.1 C723.2,303.3 725.0,303.2 728.0,301.9 C731.0,300.5 735.4,297.8 738.7,295.0 C742.0,292.2 744.5,288.1 747.8,285.1 C751.1,282.1 755.0,279.3 758.5,276.8 C762.0,274.3 765.8,271.7 769.1,269.9 C772.4,268.1 775.8,267.1 778.3,266.1 C780.8,265.1 781.9,265.3 784.0,264.1 C786.1,262.9 788.5,260.9 790.8,259.0 C793.1,257.1 795.4,254.2 797.6,253.0 C799.9,251.8 802.0,251.5 804.3,251.9 C806.5,252.3 809.1,253.6 811.1,255.6 C813.1,257.6 814.8,261.3 816.2,264.1 C817.6,266.9 818.2,268.8 819.6,272.5 C821.0,276.2 822.7,282.4 824.7,286.1 C826.7,289.8 829.2,292.7 831.5,294.6 C833.8,296.5 835.7,297.7 838.2,297.6 C840.7,297.5 843.9,293.9 846.7,294.2 C849.5,294.5 852.4,298.2 855.2,299.7 C858.0,301.2 860.9,302.6 863.7,303.1 C866.5,303.6 869.0,305.0 872.1,302.7 C875.2,300.4 879.2,292.6 882.3,289.5 C885.4,286.4 887.4,286.2 890.8,284.4 C894.2,282.6 898.9,280.2 902.6,278.5 C906.3,276.8 909.1,276.3 912.8,274.2 C916.5,272.1 920.9,269.2 924.7,265.8 C928.5,262.4 932.1,257.1 935.6,254.1 C939.1,251.1 943.3,248.7 945.8,247.6 C948.3,246.5 949.4,247.1 950.8,247.6 C952.2,248.1 952.8,247.1 954.2,250.7 C955.6,254.3 957.6,262.2 959.3,269.3 C961.0,276.4 962.7,287.6 964.4,293.0 C966.1,298.4 967.0,299.8 969.5,301.5 C972.0,303.2 972.6,302.9 979.7,303.2 C986.8,303.5 1006.5,303.2 1011.9,303.2" fill="none" stroke="#dc1a1f" stroke-width="1.9" stroke-linejoin="round"/>
</g>
<rect x="340.62" y="376.3" width="1" height="3" fill="#4a4a4a"/>
<rect x="354.26" y="376.3" width="1" height="3" fill="#4a4a4a"/>
<rect x="367.90" y="376.3" width="1" height="4.5" fill="#5a5a5a"/>
<rect x="381.54" y="376.3" width="1" height="3" fill="#4a4a4a"/>
<rect x="395.18" y="376.3" width="1" height="3" fill="#4a4a4a"/>
<rect x="408.82" y="376.3" width="1" height="3" fill="#4a4a4a"/>
<rect x="422.46" y="376.3" width="1" height="3" fill="#4a4a4a"/>
<rect x="436.10" y="376.3" width="1" height="4.5" fill="#5a5a5a"/>
<rect x="449.74" y="376.3" width="1" height="3" fill="#4a4a4a"/>
<rect x="463.38" y="376.3" width="1" height="3" fill="#4a4a4a"/>
<rect x="477.02" y="376.3" width="1" height="3" fill="#4a4a4a"/>
<rect x="490.66" y="376.3" width="1" height="3" fill="#4a4a4a"/>
<rect x="504.30" y="376.3" width="1" height="4.5" fill="#5a5a5a"/>
<rect x="517.94" y="376.3" width="1" height="3" fill="#4a4a4a"/>
<rect x="531.58" y="376.3" width="1" height="3" fill="#4a4a4a"/>
<rect x="545.22" y="376.3" width="1" height="3" fill="#4a4a4a"/>
<rect x="558.86" y="376.3" width="1" height="3" fill="#4a4a4a"/>
<rect x="572.50" y="376.3" width="1" height="4.5" fill="#5a5a5a"/>
<rect x="586.14" y="376.3" width="1" height="3" fill="#4a4a4a"/>
<rect x="599.78" y="376.3" width="1" height="3" fill="#4a4a4a"/>
<rect x="613.42" y="376.3" width="1" height="3" fill="#4a4a4a"/>
<rect x="627.06" y="376.3" width="1" height="3" fill="#4a4a4a"/>
<rect x="640.70" y="376.3" width="1" height="4.5" fill="#5a5a5a"/>
<rect x="654.34" y="376.3" width="1" height="3" fill="#4a4a4a"/>
<rect x="667.98" y="376.3" width="1" height="3" fill="#4a4a4a"/>
<rect x="681.62" y="376.3" width="1" height="3" fill="#4a4a4a"/>
<rect x="695.26" y="376.3" width="1" height="3" fill="#4a4a4a"/>
<rect x="708.90" y="376.3" width="1" height="4.5" fill="#5a5a5a"/>
<rect x="722.54" y="376.3" width="1" height="3" fill="#4a4a4a"/>
<rect x="736.18" y="376.3" width="1" height="3" fill="#4a4a4a"/>
<rect x="749.82" y="376.3" width="1" height="3" fill="#4a4a4a"/>
<rect x="763.46" y="376.3" width="1" height="3" fill="#4a4a4a"/>
<rect x="777.10" y="376.3" width="1" height="4.5" fill="#5a5a5a"/>
<rect x="790.74" y="376.3" width="1" height="3" fill="#4a4a4a"/>
<rect x="804.38" y="376.3" width="1" height="3" fill="#4a4a4a"/>
<rect x="818.02" y="376.3" width="1" height="3" fill="#4a4a4a"/>
<rect x="831.66" y="376.3" width="1" height="3" fill="#4a4a4a"/>
<rect x="845.30" y="376.3" width="1" height="4.5" fill="#5a5a5a"/>
<rect x="858.94" y="376.3" width="1" height="3" fill="#4a4a4a"/>
<rect x="872.58" y="376.3" width="1" height="3" fill="#4a4a4a"/>
<rect x="886.22" y="376.3" width="1" height="3" fill="#4a4a4a"/>
<rect x="899.86" y="376.3" width="1" height="3" fill="#4a4a4a"/>
<rect x="913.50" y="376.3" width="1" height="4.5" fill="#5a5a5a"/>
<rect x="927.14" y="376.3" width="1" height="3" fill="#4a4a4a"/>
<rect x="940.78" y="376.3" width="1" height="3" fill="#4a4a4a"/>
<rect x="954.42" y="376.3" width="1" height="3" fill="#4a4a4a"/>
<rect x="968.06" y="376.3" width="1" height="3" fill="#4a4a4a"/>
<rect x="981.70" y="376.3" width="1" height="4.5" fill="#5a5a5a"/>
<rect x="995.34" y="376.3" width="1" height="3" fill="#4a4a4a"/>
<rect x="1008.98" y="376.3" width="1" height="3" fill="#4a4a4a"/>
<rect x="1010.3" y="162.80" width="3.5" height="1" fill="#5a5a5a"/>
<rect x="1010.3" y="167.15" width="2.5" height="1" fill="#444"/>
<rect x="1010.3" y="171.50" width="2.5" height="1" fill="#444"/>
<rect x="1010.3" y="175.85" width="2.5" height="1" fill="#444"/>
<rect x="1010.3" y="180.20" width="2.5" height="1" fill="#444"/>
<rect x="1010.3" y="184.55" width="3.5" height="1" fill="#5a5a5a"/>
<rect x="1010.3" y="188.90" width="2.5" height="1" fill="#444"/>
<rect x="1010.3" y="193.25" width="2.5" height="1" fill="#444"/>
<rect x="1010.3" y="197.60" width="2.5" height="1" fill="#444"/>
<rect x="1010.3" y="201.95" width="2.5" height="1" fill="#444"/>
<rect x="1010.3" y="206.30" width="3.5" height="1" fill="#5a5a5a"/>
<rect x="1010.3" y="210.65" width="2.5" height="1" fill="#444"/>
<rect x="1010.3" y="215.00" width="2.5" height="1" fill="#444"/>
<rect x="1010.3" y="219.35" width="2.5" height="1" fill="#444"/>
<rect x="1010.3" y="223.70" width="2.5" height="1" fill="#444"/>
<rect x="1010.3" y="228.05" width="3.5" height="1" fill="#5a5a5a"/>
<rect x="1010.3" y="232.40" width="2.5" height="1" fill="#444"/>
<rect x="1010.3" y="236.75" width="2.5" height="1" fill="#444"/>
<rect x="1010.3" y="241.10" width="2.5" height="1" fill="#444"/>
<rect x="1010.3" y="245.45" width="2.5" height="1" fill="#444"/>
<rect x="1010.3" y="249.80" width="3.5" height="1" fill="#5a5a5a"/>
<rect x="1010.3" y="254.15" width="2.5" height="1" fill="#444"/>
<rect x="1010.3" y="258.50" width="2.5" height="1" fill="#444"/>
<rect x="1010.3" y="262.85" width="2.5" height="1" fill="#444"/>
<rect x="1010.3" y="267.20" width="2.5" height="1" fill="#444"/>
<rect x="1010.3" y="271.55" width="3.5" height="1" fill="#5a5a5a"/>
<rect x="1010.3" y="275.90" width="2.5" height="1" fill="#444"/>
<rect x="1010.3" y="280.25" width="2.5" height="1" fill="#444"/>
<rect x="1010.3" y="284.60" width="2.5" height="1" fill="#444"/>
<rect x="1010.3" y="288.95" width="2.5" height="1" fill="#444"/>
<rect x="1010.3" y="293.30" width="3.5" height="1" fill="#5a5a5a"/>
<rect x="1010.3" y="297.65" width="2.5" height="1" fill="#444"/>
<rect x="1010.3" y="302.00" width="2.5" height="1" fill="#444"/>
<rect x="1010.3" y="306.35" width="2.5" height="1" fill="#444"/>
<rect x="1010.3" y="310.70" width="2.5" height="1" fill="#444"/>
<rect x="1010.3" y="315.05" width="3.5" height="1" fill="#5a5a5a"/>
<rect x="1010.3" y="319.40" width="2.5" height="1" fill="#444"/>
<rect x="1010.3" y="323.75" width="2.5" height="1" fill="#444"/>
<rect x="1010.3" y="328.10" width="2.5" height="1" fill="#444"/>
<rect x="1010.3" y="332.45" width="2.5" height="1" fill="#444"/>
<rect x="1010.3" y="336.80" width="3.5" height="1" fill="#5a5a5a"/>
<rect x="1010.3" y="341.15" width="2.5" height="1" fill="#444"/>
<rect x="1010.3" y="345.50" width="2.5" height="1" fill="#444"/>
<rect x="1010.3" y="349.85" width="2.5" height="1" fill="#444"/>
<rect x="1010.3" y="354.20" width="2.5" height="1" fill="#444"/>
<rect x="1010.3" y="358.55" width="3.5" height="1" fill="#5a5a5a"/>
<rect x="1010.3" y="362.90" width="2.5" height="1" fill="#444"/>
<rect x="1010.3" y="367.25" width="2.5" height="1" fill="#444"/>
<rect x="1010.3" y="371.60" width="2.5" height="1" fill="#444"/>
<rect x="327" y="408.6" width="716" height="1" fill="#4e5660"/>
<rect x="327" y="409.6" width="716" height="3" fill="#2e3134"/>
<g clip-path="url(#dc)">
<rect x="328" y="412.6" width="697.2" height="157.10000000000002" fill="#4b4b4b"/>
<rect x="300.10" y="412.6" width="69.30" height="157.10000000000002" fill="#464646"/>
<rect x="438.70" y="412.6" width="69.30" height="157.10000000000002" fill="#464646"/>
<rect x="577.30" y="412.6" width="69.30" height="157.10000000000002" fill="#464646"/>
<rect x="715.90" y="412.6" width="69.30" height="157.10000000000002" fill="#464646"/>
<rect x="854.50" y="412.6" width="69.30" height="157.10000000000002" fill="#464646"/>
<rect x="993.10" y="412.6" width="69.30" height="157.10000000000002" fill="#464646"/>
<rect x="328" y="414.10" width="697.2" height="1" fill="#5f5f5f"/>
<rect x="328" y="416.20" width="697.2" height="0.9" fill="#3f3f3f" opacity="0.7"/>
<rect x="328" y="418.28" width="697.2" height="1" fill="#595959"/>
<rect x="328" y="422.46" width="697.2" height="1" fill="#5f5f5f"/>
<rect x="328" y="424.56" width="697.2" height="0.9" fill="#3f3f3f" opacity="0.7"/>
<rect x="328" y="426.64" width="697.2" height="1" fill="#595959"/>
<rect x="328" y="428.74" width="697.2" height="0.9" fill="#3f3f3f" opacity="0.7"/>
<rect x="328" y="430.82" width="697.2" height="1" fill="#5f5f5f"/>
<rect x="328" y="435.00" width="697.2" height="1" fill="#595959"/>
<rect x="328" y="437.10" width="697.2" height="0.9" fill="#3f3f3f" opacity="0.7"/>
<rect x="328" y="439.18" width="697.2" height="1" fill="#5f5f5f"/>
<rect x="328" y="441.28" width="697.2" height="0.9" fill="#3f3f3f" opacity="0.7"/>
<rect x="328" y="443.36" width="697.2" height="1" fill="#595959"/>
<rect x="328" y="447.54" width="697.2" height="1" fill="#5f5f5f"/>
<rect x="328" y="449.64" width="697.2" height="0.9" fill="#3f3f3f" opacity="0.7"/>
<rect x="328" y="451.72" width="697.2" height="1" fill="#595959"/>
<rect x="328" y="453.82" width="697.2" height="0.9" fill="#3f3f3f" opacity="0.7"/>
<rect x="328" y="455.90" width="697.2" height="1" fill="#5f5f5f"/>
<rect x="328" y="460.08" width="697.2" height="1" fill="#595959"/>
<rect x="328" y="462.18" width="697.2" height="0.9" fill="#3f3f3f" opacity="0.7"/>
<rect x="328" y="464.26" width="697.2" height="1" fill="#5f5f5f"/>
<rect x="328" y="466.36" width="697.2" height="0.9" fill="#3f3f3f" opacity="0.7"/>
<rect x="328" y="468.44" width="697.2" height="1" fill="#595959"/>
<rect x="328" y="472.62" width="697.2" height="1" fill="#5f5f5f"/>
<rect x="328" y="474.72" width="697.2" height="0.9" fill="#3f3f3f" opacity="0.7"/>
<rect x="328" y="476.80" width="697.2" height="1" fill="#595959"/>
<rect x="328" y="478.90" width="697.2" height="0.9" fill="#3f3f3f" opacity="0.7"/>
<rect x="328" y="480.98" width="697.2" height="1" fill="#5f5f5f"/>
<rect x="328" y="485.16" width="697.2" height="1" fill="#595959"/>
<rect x="328" y="487.26" width="697.2" height="0.9" fill="#3f3f3f" opacity="0.7"/>
<rect x="328" y="489.34" width="697.2" height="1" fill="#5f5f5f"/>
<rect x="328" y="491.44" width="697.2" height="0.9" fill="#3f3f3f" opacity="0.7"/>
<rect x="328" y="493.52" width="697.2" height="1" fill="#595959"/>
<rect x="328" y="497.70" width="697.2" height="1" fill="#5f5f5f"/>
<rect x="328" y="499.80" width="697.2" height="0.9" fill="#3f3f3f" opacity="0.7"/>
<rect x="328" y="501.88" width="697.2" height="1" fill="#595959"/>
<rect x="328" y="503.98" width="697.2" height="0.9" fill="#3f3f3f" opacity="0.7"/>
<rect x="328" y="506.06" width="697.2" height="1" fill="#5f5f5f"/>
<rect x="328" y="510.24" width="697.2" height="1" fill="#595959"/>
<rect x="328" y="512.34" width="697.2" height="0.9" fill="#3f3f3f" opacity="0.7"/>
<rect x="328" y="514.42" width="697.2" height="1" fill="#5f5f5f"/>
<rect x="328" y="516.52" width="697.2" height="0.9" fill="#3f3f3f" opacity="0.7"/>
<rect x="328" y="518.60" width="697.2" height="1" fill="#595959"/>
<rect x="328" y="522.78" width="697.2" height="1" fill="#5f5f5f"/>
<rect x="328" y="524.88" width="697.2" height="0.9" fill="#3f3f3f" opacity="0.7"/>
<rect x="328" y="526.96" width="697.2" height="1" fill="#595959"/>
<rect x="328" y="529.06" width="697.2" height="0.9" fill="#3f3f3f" opacity="0.7"/>
<rect x="328" y="531.14" width="697.2" height="1" fill="#5f5f5f"/>
<rect x="328" y="535.32" width="697.2" height="1" fill="#595959"/>
<rect x="328" y="537.42" width="697.2" height="0.9" fill="#3f3f3f" opacity="0.7"/>
<rect x="328" y="539.50" width="697.2" height="1" fill="#5f5f5f"/>
<rect x="328" y="541.60" width="697.2" height="0.9" fill="#3f3f3f" opacity="0.7"/>
<rect x="328" y="543.68" width="697.2" height="1" fill="#595959"/>
<rect x="328" y="547.86" width="697.2" height="1" fill="#5f5f5f"/>
<rect x="328" y="549.96" width="697.2" height="0.9" fill="#3f3f3f" opacity="0.7"/>
<rect x="328" y="552.04" width="697.2" height="1" fill="#595959"/>
<rect x="328" y="554.14" width="697.2" height="0.9" fill="#3f3f3f" opacity="0.7"/>
<rect x="328" y="556.22" width="697.2" height="1" fill="#5f5f5f"/>
<rect x="328" y="560.40" width="697.2" height="1" fill="#595959"/>
<rect x="328" y="562.50" width="697.2" height="0.9" fill="#3f3f3f" opacity="0.7"/>
<rect x="328" y="564.58" width="697.2" height="1" fill="#5f5f5f"/>
<rect x="328" y="566.68" width="697.2" height="0.9" fill="#3f3f3f" opacity="0.7"/>
<rect x="328" y="568.76" width="697.2" height="1" fill="#595959"/>
<rect x="230.30" y="412.6" width="1" height="157.10000000000002" fill="#666"/>
<rect x="244.16" y="412.6" width="1" height="157.10000000000002" fill="#4a4a4a" opacity="0.25"/>
<rect x="258.02" y="412.6" width="1" height="157.10000000000002" fill="#4a4a4a" opacity="0.25"/>
<rect x="271.88" y="412.6" width="1" height="157.10000000000002" fill="#4a4a4a" opacity="0.25"/>
<rect x="285.74" y="412.6" width="1" height="157.10000000000002" fill="#4a4a4a" opacity="0.25"/>
<rect x="299.60" y="412.6" width="1" height="157.10000000000002" fill="#666"/>
<rect x="313.46" y="412.6" width="1" height="157.10000000000002" fill="#4a4a4a" opacity="0.25"/>
<rect x="327.32" y="412.6" width="1" height="157.10000000000002" fill="#4a4a4a" opacity="0.25"/>
<rect x="341.18" y="412.6" width="1" height="157.10000000000002" fill="#4a4a4a" opacity="0.25"/>
<rect x="355.04" y="412.6" width="1" height="157.10000000000002" fill="#4a4a4a" opacity="0.25"/>
<rect x="368.90" y="412.6" width="1" height="157.10000000000002" fill="#666"/>
<rect x="382.76" y="412.6" width="1" height="157.10000000000002" fill="#4a4a4a" opacity="0.25"/>
<rect x="396.62" y="412.6" width="1" height="157.10000000000002" fill="#4a4a4a" opacity="0.25"/>
<rect x="410.48" y="412.6" width="1" height="157.10000000000002" fill="#4a4a4a" opacity="0.25"/>
<rect x="424.34" y="412.6" width="1" height="157.10000000000002" fill="#4a4a4a" opacity="0.25"/>
<rect x="438.20" y="412.6" width="1" height="157.10000000000002" fill="#666"/>
<rect x="452.06" y="412.6" width="1" height="157.10000000000002" fill="#4a4a4a" opacity="0.25"/>
<rect x="465.92" y="412.6" width="1" height="157.10000000000002" fill="#4a4a4a" opacity="0.25"/>
<rect x="479.78" y="412.6" width="1" height="157.10000000000002" fill="#4a4a4a" opacity="0.25"/>
<rect x="493.64" y="412.6" width="1" height="157.10000000000002" fill="#4a4a4a" opacity="0.25"/>
<rect x="507.50" y="412.6" width="1" height="157.10000000000002" fill="#666"/>
<rect x="521.36" y="412.6" width="1" height="157.10000000000002" fill="#4a4a4a" opacity="0.25"/>
<rect x="535.22" y="412.6" width="1" height="157.10000000000002" fill="#4a4a4a" opacity="0.25"/>
<rect x="549.08" y="412.6" width="1" height="157.10000000000002" fill="#4a4a4a" opacity="0.25"/>
<rect x="562.94" y="412.6" width="1" height="157.10000000000002" fill="#4a4a4a" opacity="0.25"/>
<rect x="576.80" y="412.6" width="1" height="157.10000000000002" fill="#666"/>
<rect x="590.66" y="412.6" width="1" height="157.10000000000002" fill="#4a4a4a" opacity="0.25"/>
<rect x="604.52" y="412.6" width="1" height="157.10000000000002" fill="#4a4a4a" opacity="0.25"/>
<rect x="618.38" y="412.6" width="1" height="157.10000000000002" fill="#4a4a4a" opacity="0.25"/>
<rect x="632.24" y="412.6" width="1" height="157.10000000000002" fill="#4a4a4a" opacity="0.25"/>
<rect x="646.10" y="412.6" width="1" height="157.10000000000002" fill="#666"/>
<rect x="659.96" y="412.6" width="1" height="157.10000000000002" fill="#4a4a4a" opacity="0.25"/>
<rect x="673.82" y="412.6" width="1" height="157.10000000000002" fill="#4a4a4a" opacity="0.25"/>
<rect x="687.68" y="412.6" width="1" height="157.10000000000002" fill="#4a4a4a" opacity="0.25"/>
<rect x="701.54" y="412.6" width="1" height="157.10000000000002" fill="#4a4a4a" opacity="0.25"/>
<rect x="715.40" y="412.6" width="1" height="157.10000000000002" fill="#666"/>
<rect x="729.26" y="412.6" width="1" height="157.10000000000002" fill="#4a4a4a" opacity="0.25"/>
<rect x="743.12" y="412.6" width="1" height="157.10000000000002" fill="#4a4a4a" opacity="0.25"/>
<rect x="756.98" y="412.6" width="1" height="157.10000000000002" fill="#4a4a4a" opacity="0.25"/>
<rect x="770.84" y="412.6" width="1" height="157.10000000000002" fill="#4a4a4a" opacity="0.25"/>
<rect x="784.70" y="412.6" width="1" height="157.10000000000002" fill="#666"/>
<rect x="798.56" y="412.6" width="1" height="157.10000000000002" fill="#4a4a4a" opacity="0.25"/>
<rect x="812.42" y="412.6" width="1" height="157.10000000000002" fill="#4a4a4a" opacity="0.25"/>
<rect x="826.28" y="412.6" width="1" height="157.10000000000002" fill="#4a4a4a" opacity="0.25"/>
<rect x="840.14" y="412.6" width="1" height="157.10000000000002" fill="#4a4a4a" opacity="0.25"/>
<rect x="854.00" y="412.6" width="1" height="157.10000000000002" fill="#666"/>
<rect x="867.86" y="412.6" width="1" height="157.10000000000002" fill="#4a4a4a" opacity="0.25"/>
<rect x="881.72" y="412.6" width="1" height="157.10000000000002" fill="#4a4a4a" opacity="0.25"/>
<rect x="895.58" y="412.6" width="1" height="157.10000000000002" fill="#4a4a4a" opacity="0.25"/>
<rect x="909.44" y="412.6" width="1" height="157.10000000000002" fill="#4a4a4a" opacity="0.25"/>
<rect x="923.30" y="412.6" width="1" height="157.10000000000002" fill="#666"/>
<rect x="937.16" y="412.6" width="1" height="157.10000000000002" fill="#4a4a4a" opacity="0.25"/>
<rect x="951.02" y="412.6" width="1" height="157.10000000000002" fill="#4a4a4a" opacity="0.25"/>
<rect x="964.88" y="412.6" width="1" height="157.10000000000002" fill="#4a4a4a" opacity="0.25"/>
<rect x="978.74" y="412.6" width="1" height="157.10000000000002" fill="#4a4a4a" opacity="0.25"/>
<rect x="992.60" y="412.6" width="1" height="157.10000000000002" fill="#666"/>
<rect x="1006.46" y="412.6" width="1" height="157.10000000000002" fill="#4a4a4a" opacity="0.25"/>
<rect x="1020.32" y="412.6" width="1" height="157.10000000000002" fill="#4a4a4a" opacity="0.25"/>
<rect x="1034.18" y="412.6" width="1" height="157.10000000000002" fill="#4a4a4a" opacity="0.25"/>
<rect x="1048.04" y="412.6" width="1" height="157.10000000000002" fill="#4a4a4a" opacity="0.25"/>
</g>
<rect x="328" y="441.75" width="698.2" height="1.3" fill="#4b0f8c"/>
<rect x="328" y="483.65" width="698.2" height="1.3" fill="#1ed31e"/>
<rect x="328" y="525.55" width="698.2" height="1.3" fill="#2f86d6"/>
<rect x="328" y="547.35" width="698.2" height="1.3" fill="#e19a22"/>
</svg><div class="r" style="left:333.9px;top:165.6px;width:81.4px;height:34.7px;background:rgba(255,255,255,0.42);"></div>
<div class="r" style="left:340.1px;top:172.75px;width:21.8px;height:1.5px;background:#e8141c;"></div>
<div class="t" style="left:365.10px;top:169.86px;font-size:7px;font-weight:bold;color:#f8f8f8;transform:scaleX(1.0194);">Net</div>
<div class="r" style="left:340.1px;top:182.15px;width:21.8px;height:1.5px;background:#363a8c;"></div>
<div class="t" style="left:365.10px;top:179.26px;font-size:7px;font-weight:bold;color:#f8f8f8;transform:scaleX(0.9242);">Brut</div>
<div class="r" style="left:340.1px;top:191.65px;width:21.8px;height:1.5px;background:#e8141c;"></div>
<div class="t" style="left:365.10px;top:188.76px;font-size:7px;font-weight:bold;color:#f8f8f8;transform:scaleX(0.9247);">Factory points</div>
<div class="t" style="left:1016.30px;top:161.46px;font-size:7px;font-weight:normal;color:#d8d8d8;transform:scaleX(0.9244);-webkit-text-stroke:0;">4000</div>
<div class="t" style="left:1016.30px;top:182.01px;font-size:7px;font-weight:normal;color:#d8d8d8;transform:scaleX(0.9244);-webkit-text-stroke:0;">3500</div>
<div class="t" style="left:1016.30px;top:203.76px;font-size:7px;font-weight:normal;color:#d8d8d8;transform:scaleX(0.9244);-webkit-text-stroke:0;">3000</div>
<div class="t" style="left:1016.30px;top:225.51px;font-size:7px;font-weight:normal;color:#d8d8d8;transform:scaleX(0.9244);-webkit-text-stroke:0;">2500</div>
<div class="t" style="left:1016.30px;top:247.26px;font-size:7px;font-weight:normal;color:#d8d8d8;transform:scaleX(0.9244);-webkit-text-stroke:0;">2000</div>
<div class="t" style="left:1016.30px;top:269.01px;font-size:7px;font-weight:normal;color:#d8d8d8;transform:scaleX(0.9244);-webkit-text-stroke:0;">1500</div>
<div class="t" style="left:1016.30px;top:290.76px;font-size:7px;font-weight:normal;color:#d8d8d8;transform:scaleX(0.9244);-webkit-text-stroke:0;">1000</div>
<div class="t" style="left:1016.30px;top:312.51px;font-size:7px;font-weight:normal;color:#d8d8d8;transform:scaleX(0.9070);-webkit-text-stroke:0;">500</div>
<div class="t" style="left:1016.30px;top:334.26px;font-size:7px;font-weight:normal;color:#d8d8d8;transform:scaleX(0.9216);-webkit-text-stroke:0;">0</div>
<div class="t" style="left:1016.30px;top:356.01px;font-size:7px;font-weight:normal;color:#d8d8d8;transform:scaleX(0.9489);-webkit-text-stroke:0;">-500</div>
<div class="t" style="left:364.10px;top:384.16px;font-size:7.2px;font-weight:normal;color:#d8d8d8;transform:scaleX(0.9200);-webkit-text-stroke:0;">7,0</div>
<div class="t" style="left:432.30px;top:384.16px;font-size:7.2px;font-weight:normal;color:#d8d8d8;transform:scaleX(0.9200);-webkit-text-stroke:0;">8,0</div>
<div class="t" style="left:500.50px;top:384.16px;font-size:7.2px;font-weight:normal;color:#d8d8d8;transform:scaleX(0.9200);-webkit-text-stroke:0;">9,0</div>
<div class="t" style="left:567.20px;top:384.16px;font-size:7.2px;font-weight:normal;color:#d8d8d8;transform:scaleX(0.8714);-webkit-text-stroke:0;">10,0</div>
<div class="t" style="left:635.40px;top:384.16px;font-size:7.2px;font-weight:normal;color:#d8d8d8;transform:scaleX(0.9058);-webkit-text-stroke:0;">11,0</div>
<div class="t" style="left:703.60px;top:384.16px;font-size:7.2px;font-weight:normal;color:#d8d8d8;transform:scaleX(0.8714);-webkit-text-stroke:0;">12,0</div>
<div class="t" style="left:771.80px;top:384.16px;font-size:7.2px;font-weight:normal;color:#d8d8d8;transform:scaleX(0.8714);-webkit-text-stroke:0;">13,0</div>
<div class="t" style="left:840.00px;top:384.16px;font-size:7.2px;font-weight:normal;color:#d8d8d8;transform:scaleX(0.8714);-webkit-text-stroke:0;">14,0</div>
<div class="t" style="left:908.20px;top:384.16px;font-size:7.2px;font-weight:normal;color:#d8d8d8;transform:scaleX(0.8714);-webkit-text-stroke:0;">15,0</div>
<div class="t" style="left:976.40px;top:384.16px;font-size:7.2px;font-weight:normal;color:#d8d8d8;transform:scaleX(0.8714);-webkit-text-stroke:0;">16,0</div>
<div class="t" style="left:661.20px;top:398.16px;font-size:7px;font-weight:bold;color:#fff;transform:scaleX(0.9865);">Time</div>
<div class="r" style="left:1038.1px;top:268.5px;width:0;height:0;"><div class="t" style="left:-12.25px;top:-3.6px;font-size:7.2px;font-weight:bold;color:#fff;transform:rotate(-90deg);transform-origin:12.25px 3.6px;width:24.5px;text-align:center;">Weight</div></div>
<svg class="r" style="left:1010px;top:282px" width="24" height="12"><path d="M0.7 5.7 L4.5 0.5 H23.7 V11 H4.5 Z" fill="#14147a"/></svg>
<div class="t" style="left:1016.20px;top:285.05px;font-size:7.4px;font-weight:bold;color:#fff;transform:scaleX(0.9846);">1140</div>
<svg class="r" style="left:1010px;top:298.8px" width="21" height="11"><path d="M0.7 5.3 L4.5 0.4 H20.4 V10.4 H4.5 Z" fill="#f00a0a"/></svg>
<div class="t" style="left:1016.30px;top:300.85px;font-size:7.4px;font-weight:bold;color:#fff;transform:scaleX(0.9235);">769</div>
<div class="r" style="left:333.9px;top:418.9px;width:64.2px;height:16px;background:rgba(255,255,255,0.42);"></div>
<svg class="r" style="left:340.3px;top:422.2px" width="8.4" height="8.6" viewBox="0 0 8.4 8.6"><rect x="0.4" y="0.4" width="7.6" height="7.8" fill="#fff" stroke="#8a8a8a" stroke-width="0.7"/><path d="M1.9 4.3 L3.4 6.3 L6.6 1.8" stroke="#151515" stroke-width="1.2" fill="none"/></svg>
<div class="r" style="left:352px;top:425.9px;width:21.3px;height:1.5px;background:#6a1fb0;"></div>
<div class="t" style="left:376.80px;top:423.95px;font-size:7.4px;font-weight:bold;color:#f6f6f6;transform:scaleX(0.9024);">Out1</div>
<div class="r" style="left:333.9px;top:460.5px;width:64.2px;height:16px;background:rgba(255,255,255,0.42);"></div>
<svg class="r" style="left:340.3px;top:463.8px" width="8.4" height="8.6" viewBox="0 0 8.4 8.6"><rect x="0.4" y="0.4" width="7.6" height="7.8" fill="#fff" stroke="#8a8a8a" stroke-width="0.7"/><path d="M1.9 4.3 L3.4 6.3 L6.6 1.8" stroke="#151515" stroke-width="1.2" fill="none"/></svg>
<div class="r" style="left:352px;top:467.5px;width:21.3px;height:1.5px;background:#2fe02f;"></div>
<div class="t" style="left:376.80px;top:465.55px;font-size:7.4px;font-weight:bold;color:#f6f6f6;transform:scaleX(0.9024);">Out2</div>
<div class="r" style="left:333.9px;top:502.2px;width:64.2px;height:16px;background:rgba(255,255,255,0.42);"></div>
<svg class="r" style="left:340.3px;top:505.5px" width="8.4" height="8.6" viewBox="0 0 8.4 8.6"><rect x="0.4" y="0.4" width="7.6" height="7.8" fill="#fff" stroke="#8a8a8a" stroke-width="0.7"/><path d="M1.9 4.3 L3.4 6.3 L6.6 1.8" stroke="#151515" stroke-width="1.2" fill="none"/></svg>
<div class="r" style="left:352px;top:509.2px;width:21.3px;height:1.5px;background:#3c93e0;"></div>
<div class="t" style="left:376.80px;top:507.25px;font-size:7.4px;font-weight:bold;color:#f6f6f6;transform:scaleX(0.9024);">Out3</div>
<div class="r" style="left:333.9px;top:544.3px;width:64.2px;height:16px;background:rgba(255,255,255,0.42);"></div>
<svg class="r" style="left:340.3px;top:547.5999999999999px" width="8.4" height="8.6" viewBox="0 0 8.4 8.6"><rect x="0.4" y="0.4" width="7.6" height="7.8" fill="#fff" stroke="#8a8a8a" stroke-width="0.7"/><path d="M1.9 4.3 L3.4 6.3 L6.6 1.8" stroke="#151515" stroke-width="1.2" fill="none"/></svg>
<div class="r" style="left:352px;top:551.3px;width:21.3px;height:1.5px;background:#e9a23a;"></div>
<div class="t" style="left:376.80px;top:549.35px;font-size:7.4px;font-weight:bold;color:#f6f6f6;transform:scaleX(0.9024);">Out4</div>
<svg class="r" style="left:1022px;top:437.3px" width="12" height="12"><path d="M0.4 6 L3.5 0.7 H11.7 V11.3 H3.5 Z" fill="#4b0f8c"/></svg>
<div class="t" style="left:1025.90px;top:440.52px;font-size:6.5px;font-weight:bold;color:#fff;transform:scaleX(1.0483);">0</div>
<svg class="r" style="left:1022px;top:479px" width="12" height="12"><path d="M0.4 6 L3.5 0.7 H11.7 V11.3 H3.5 Z" fill="#1ed31e"/></svg>
<div class="t" style="left:1025.90px;top:482.22px;font-size:6.5px;font-weight:bold;color:#000;transform:scaleX(1.0483);">0</div>
<svg class="r" style="left:1022px;top:520.6px" width="12" height="12"><path d="M0.4 6 L3.5 0.7 H11.7 V11.3 H3.5 Z" fill="#2f86d6"/></svg>
<div class="t" style="left:1025.90px;top:523.82px;font-size:6.5px;font-weight:bold;color:#fff;transform:scaleX(1.0483);">0</div>
<svg class="r" style="left:1022px;top:541.5px" width="12" height="12"><path d="M0.4 6 L3.5 0.7 H11.7 V11.3 H3.5 Z" fill="#e19a22"/></svg>
<div class="t" style="left:1025.90px;top:544.72px;font-size:6.5px;font-weight:bold;color:#000;transform:scaleX(1.0483);">1</div>
<div class="r" style="left:326px;top:569.7px;width:717px;height:13.5px;background:linear-gradient(#fafafb,#e3e4e8);"></div>
<div class="r" style="left:491.1px;top:569.8px;width:28.7px;height:12.4px;background:#008a00;"></div>
<div class="t" style="left:493.30px;top:573.58px;font-size:6px;font-weight:normal;color:#022;transform:scaleX(0.9538);">Connecté</div>
<div class="t" style="left:539.20px;top:573.98px;font-size:6px;font-weight:normal;color:#444;transform:scaleX(0.9549);">Protocole de communication: ModBus</div>
<div class="t" style="left:646.70px;top:573.98px;font-size:6px;font-weight:normal;color:#444;transform:scaleX(0.9454);">Electronique utilisée: eNod4-F</div>
<div class="t" style="left:733.30px;top:573.98px;font-size:6px;font-weight:normal;color:#444;transform:scaleX(0.9267);">Adresse:  0x2</div>
<div class="t" style="left:778.30px;top:573.98px;font-size:6px;font-weight:normal;color:#444;transform:scaleX(0.9940);">Débit: 115200</div>
</div>
</body></html>
